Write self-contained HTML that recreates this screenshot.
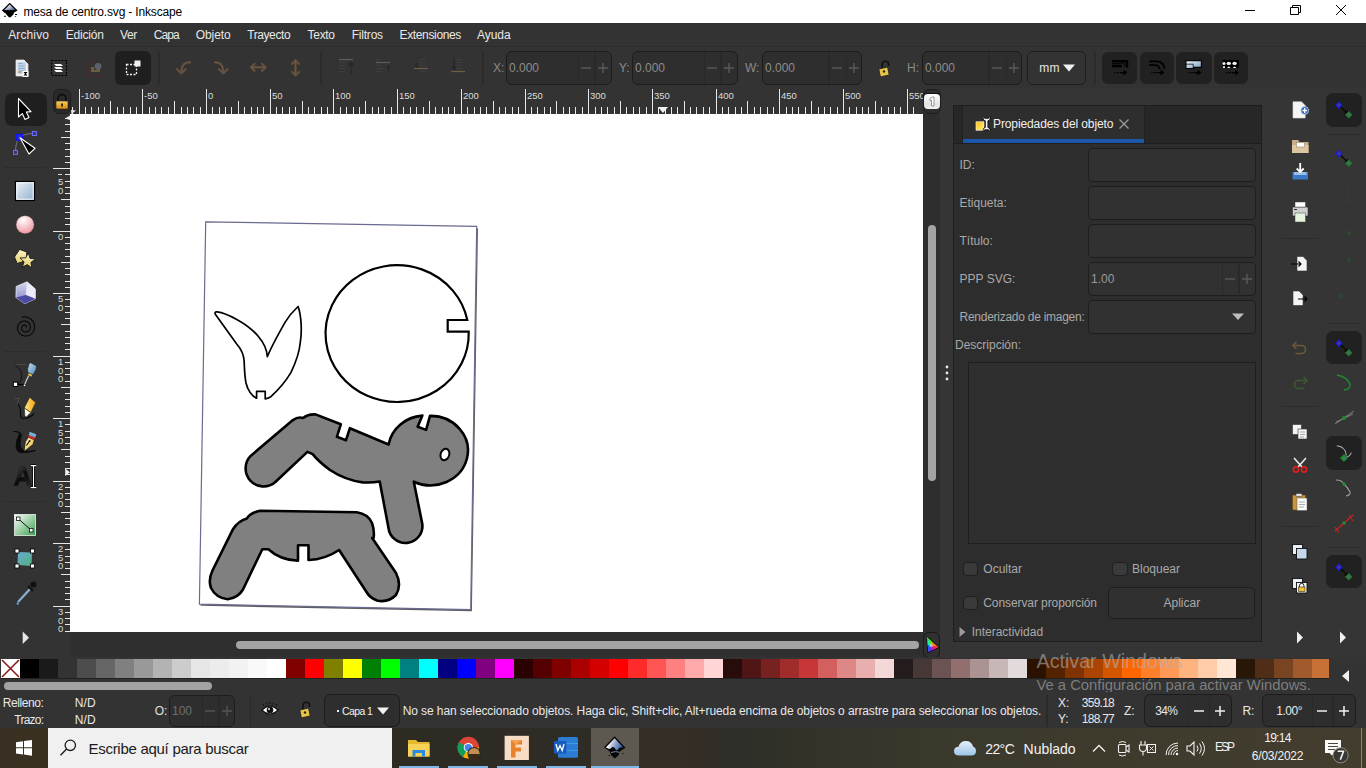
<!DOCTYPE html><html><head><meta charset="utf-8"><style>
html,body{margin:0;padding:0;width:1366px;height:768px;overflow:hidden;background:#333333;}
body{position:relative;font-family:"Liberation Sans",sans-serif;}
.t{position:absolute;white-space:pre;}
svg{position:absolute;overflow:visible;}
</style></head><body><div style="position:absolute;left:0px;top:0px;width:1366px;height:23px;background:#ffffff"></div><span class="t" style="left:23.4px;top:5.5px;font:400 12px/12px 'Liberation Sans';color:#000000;letter-spacing:-0.163px;">mesa de centro.svg - Inkscape</span><svg style="left:0;top:0" width="22" height="22" viewBox="0 0 22 22"><defs><linearGradient id="gink" x1="0" y1="0" x2="1" y2="1"><stop offset="0.2" stop-color="#ffffff"/><stop offset="1" stop-color="#2a4a8a"/></linearGradient></defs><path d="M9.7 2.8L17.6 10.5L14.5 12.2Q13.3 13 13.6 14.2L11.2 16.8Q9.8 18.3 8.4 16.8L6.6 14.8Q6.2 13.3 4.5 12.8L1.9 10.5Z" fill="#000"/><path d="M9.7 4.6L15.4 10.2Q13.5 9.3 12.2 10.3Q10.8 9 9.2 10.4Q7.6 9.2 6.2 10.2Q5 9.6 4.1 10.2Z" fill="url(#gink)"/><path d="M4 16.3h1.8M15 14.5h2M15.3 16.5h0.8" stroke="#000" stroke-width="1"/></svg><svg style="left:1230px;top:0" width="136" height="23" viewBox="1230 0 136 23"><path d="M1245 10.5h10" stroke="#000" stroke-width="1"/><path d="M1290.5 7.5h8v7h-8z" stroke="#000" stroke-width="1" fill="none"/><path d="M1292.5 7.5V5.5H1300.5V12.5H1298.5" stroke="#000" stroke-width="1" fill="none"/><path d="M1336 5l10 10M1346 5l-10 10" stroke="#000" stroke-width="1"/></svg><div style="position:absolute;left:0px;top:23px;width:1366px;height:23px;background:#333333"></div><span class="t" style="left:8.2px;top:28.6px;font:400 12px/12px 'Liberation Sans';color:#e8e8e8;letter-spacing:0.126px;">Archivo</span><span class="t" style="left:65.7px;top:28.6px;font:400 12px/12px 'Liberation Sans';color:#e8e8e8;letter-spacing:-0.194px;">Edición</span><span class="t" style="left:119.9px;top:28.6px;font:400 12px/12px 'Liberation Sans';color:#e8e8e8;letter-spacing:-0.305px;">Ver</span><span class="t" style="left:153.8px;top:28.6px;font:400 12px/12px 'Liberation Sans';color:#e8e8e8;letter-spacing:-0.897px;">Capa</span><span class="t" style="left:195.7px;top:28.6px;font:400 12px/12px 'Liberation Sans';color:#e8e8e8;letter-spacing:-0.060px;">Objeto</span><span class="t" style="left:247.2px;top:28.6px;font:400 12px/12px 'Liberation Sans';color:#e8e8e8;letter-spacing:-0.406px;">Trayecto</span><span class="t" style="left:307.6px;top:28.6px;font:400 12px/12px 'Liberation Sans';color:#e8e8e8;letter-spacing:-0.318px;">Texto</span><span class="t" style="left:351.7px;top:28.6px;font:400 12px/12px 'Liberation Sans';color:#e8e8e8;letter-spacing:-0.210px;">Filtros</span><span class="t" style="left:399.5px;top:28.6px;font:400 12px/12px 'Liberation Sans';color:#e8e8e8;letter-spacing:-0.352px;">Extensiones</span><span class="t" style="left:477.1px;top:28.6px;font:400 12px/12px 'Liberation Sans';color:#e8e8e8;letter-spacing:-0.083px;">Ayuda</span><div style="position:absolute;left:0px;top:46px;width:1366px;height:1px;background:#2b2b2b"></div><div style="position:absolute;left:0px;top:47px;width:1366px;height:42px;background:#333333"></div><svg style="left:15px;top:59px" width="14" height="18" viewBox="0 0 14 18"><path d="M1 1h8l4 4v12H1z" fill="#f4f4f4" stroke="#d8d8d8" stroke-width="0.8"/><rect x="2.5" y="3" width="8.5" height="12" fill="#bcd3ea"/><path d="M3.5 4.5h4M3.5 7h6M3.5 9.5h6M3.5 12h6" stroke="#8aa6c4" stroke-width="0.9"/><rect x="3.5" y="12" width="3" height="2" fill="#d8a060"/><rect x="7.5" y="12" width="6" height="6" fill="#ffffff"/><path d="M8.5 13h4l-1.5 1.8l1.5 1.8h-4l1.5-1.8z" fill="#000"/></svg><svg style="left:51px;top:60px" width="16" height="16" viewBox="0 0 16 16"><rect x="0.5" y="0.5" width="15" height="15" fill="none" stroke="#000" stroke-width="1.1" stroke-dasharray="2,1.3"/><path d="M3 4l7 0l2 2l-7 0z M3 7l7 0l2 2l-7 0z M3 10l7 0l2 2l-7 0z" fill="#fafafa"/></svg><svg style="left:88px;top:60px" width="16" height="16" viewBox="0 0 16 16"><rect x="0.5" y="0.5" width="15" height="15" fill="none" stroke="#5a2222" stroke-width="0.9" stroke-dasharray="1.6,1.4"/><path d="M3 7l3 0l0 3l3 0l0 -1l3 0l0 3l-9 0z" fill="#6e5d3c"/><circle cx="10" cy="6.5" r="3.4" fill="#5d6066"/></svg><div style="position:absolute;left:115px;top:51px;width:36px;height:34px;background:#1f1f1f;border-radius:6px"></div><svg style="left:125px;top:60px" width="17" height="16" viewBox="0 0 17 16"><rect x="1.5" y="4.5" width="10" height="10" fill="none" stroke="#f0f0f0" stroke-width="1.3" stroke-dasharray="2,1.5"/><rect x="9.5" y="0.5" width="6" height="6" fill="#f0f0f0"/></svg><div style="position:absolute;left:158px;top:51px;width:2px;height:34px;background:#2c2c2c"></div><div style="position:absolute;left:320px;top:51px;width:2px;height:34px;background:#2c2c2c"></div><div style="position:absolute;left:482px;top:51px;width:2px;height:34px;background:#2c2c2c"></div><div style="position:absolute;left:1094px;top:51px;width:2px;height:34px;background:#2c2c2c"></div><svg style="left:170px;top:55px" width="140" height="25" viewBox="170 55 140 25"><g fill="none" stroke-linecap="round" stroke-linejoin="round"><path d="M190 62.3Q181.8 62 181.3 71.5M177 69.2l4.3 4.3l4.3-4.3" stroke="#5e4a34" stroke-width="2.4"/><path d="M190 62.3Q181.8 62 181.3 71.5M177 69.2l4.3 4.3l4.3-4.3" stroke="#6a625a" stroke-width="0.7"/><path d="M215 62.3Q222.8 62 223.3 71.5M219 69.2l4.3 4.3l4.3-4.3" stroke="#5e4a34" stroke-width="2.4"/><path d="M215 62.3Q222.8 62 223.3 71.5M219 69.2l4.3 4.3l4.3-4.3" stroke="#6a625a" stroke-width="0.7"/><path d="M251 67.3h14.5M254.5 63.8l-3.5 3.5l3.5 3.5M262 63.8l3.5 3.5l-3.5 3.5" stroke="#5e4a34" stroke-width="2.4"/><path d="M251 67.3h14.5M254.5 63.8l-3.5 3.5l3.5 3.5M262 63.8l3.5 3.5l-3.5 3.5" stroke="#6a625a" stroke-width="0.7"/><path d="M295.5 60.3v15M292 63.8l3.5-3.5l3.5 3.5M292 71.8l3.5 3.5l3.5-3.5" stroke="#5e4a34" stroke-width="2.4"/><path d="M295.5 60.3v15M292 63.8l3.5-3.5l3.5 3.5M292 71.8l3.5 3.5l3.5-3.5" stroke="#6a625a" stroke-width="0.7"/></g></svg><svg style="left:338px;top:58px" width="130" height="18" viewBox="0 0 130 18"><path d="M1 1.5h14" stroke="#5c5c5c" stroke-width="1.2"/><path d="M1 4.5h6M1 7.5h6M1 10.5h6M1 13.5h6" stroke="#3e3e3e" stroke-width="1"/><path d="M13 16V5M10.5 7.5l2.5-3l2.5 3" stroke="#262626" stroke-width="1.2" fill="none"/><path d="M38 1.5h6M38 7.5h6M38 10.5h8M38 13.5h6" stroke="#3e3e3e" stroke-width="1"/><path d="M38 4.5h14" stroke="#5c5c5c" stroke-width="1.2"/><path d="M49 9.5l1.5-1.5l1.5 1.5M50.5 8v5" stroke="#262626" stroke-width="1.2" fill="none"/><path d="M82 1.5h6M80 4.5h8M82 7.5h6M82 13.5h6" stroke="#3e3e3e" stroke-width="1"/><path d="M76 10.5h14" stroke="#6c6040" stroke-width="1.2"/><path d="M80 5l-2.5 2.5l2.5 2.5" stroke="#262626" stroke-width="1.2" fill="none"/><path d="M118 1.5h6M118 4.5h6M118 7.5h6M118 10.5h6" stroke="#3e3e3e" stroke-width="1"/><path d="M113 13.5h14" stroke="#6c6040" stroke-width="1.2"/><path d="M116 1v10M113.5 8.5l2.5 2.5l2.5-2.5" stroke="#262626" stroke-width="1.2" fill="none"/></svg><div style="position:absolute;left:506px;top:51px;width:106px;height:34px;box-sizing:border-box;border:1px solid #1d1d1d;border-radius:6px;background:#2e2e2e"></div><div style="position:absolute;left:578px;top:52px;width:1px;height:32px;background:#292929"></div><div style="position:absolute;left:594px;top:52px;width:2px;height:32px;background:#292929"></div><svg style="left:580.0px;top:62.0px" width="12" height="12" viewBox="0 0 12 12"><path d="M1 6h10" stroke="#5a5a5a" stroke-width="1.4"/></svg><svg style="left:597.25px;top:62.0px" width="12" height="12" viewBox="0 0 12 12"><path d="M1 6h10M6 1v10" stroke="#5a5a5a" stroke-width="1.4"/></svg><span class="t" style="left:509.0px;top:62.1px;font:400 12px/12px 'Liberation Sans';color:#8c8c8c;letter-spacing:0.000px;">0.000</span><div style="position:absolute;left:632px;top:51px;width:106px;height:34px;box-sizing:border-box;border:1px solid #1d1d1d;border-radius:6px;background:#2e2e2e"></div><div style="position:absolute;left:704px;top:52px;width:1px;height:32px;background:#292929"></div><div style="position:absolute;left:720px;top:52px;width:2px;height:32px;background:#292929"></div><svg style="left:706.0px;top:62.0px" width="12" height="12" viewBox="0 0 12 12"><path d="M1 6h10" stroke="#5a5a5a" stroke-width="1.4"/></svg><svg style="left:723.25px;top:62.0px" width="12" height="12" viewBox="0 0 12 12"><path d="M1 6h10M6 1v10" stroke="#5a5a5a" stroke-width="1.4"/></svg><span class="t" style="left:635.0px;top:62.1px;font:400 12px/12px 'Liberation Sans';color:#8c8c8c;letter-spacing:0.000px;">0.000</span><div style="position:absolute;left:762px;top:51px;width:100px;height:34px;box-sizing:border-box;border:1px solid #1d1d1d;border-radius:6px;background:#2e2e2e"></div><div style="position:absolute;left:828px;top:52px;width:2px;height:32px;background:#292929"></div><div style="position:absolute;left:846px;top:52px;width:1px;height:32px;background:#292929"></div><svg style="left:831.0px;top:62.0px" width="12" height="12" viewBox="0 0 12 12"><path d="M1 6h10" stroke="#5a5a5a" stroke-width="1.4"/></svg><svg style="left:847.75px;top:62.0px" width="12" height="12" viewBox="0 0 12 12"><path d="M1 6h10M6 1v10" stroke="#5a5a5a" stroke-width="1.4"/></svg><span class="t" style="left:765.0px;top:62.1px;font:400 12px/12px 'Liberation Sans';color:#8c8c8c;letter-spacing:0.000px;">0.000</span><div style="position:absolute;left:922px;top:51px;width:100px;height:34px;box-sizing:border-box;border:1px solid #1d1d1d;border-radius:6px;background:#2e2e2e"></div><div style="position:absolute;left:988px;top:52px;width:2px;height:32px;background:#292929"></div><div style="position:absolute;left:1006px;top:52px;width:1px;height:32px;background:#292929"></div><svg style="left:991.0px;top:62.0px" width="12" height="12" viewBox="0 0 12 12"><path d="M1 6h10" stroke="#5a5a5a" stroke-width="1.4"/></svg><svg style="left:1007.75px;top:62.0px" width="12" height="12" viewBox="0 0 12 12"><path d="M1 6h10M6 1v10" stroke="#5a5a5a" stroke-width="1.4"/></svg><span class="t" style="left:925.0px;top:62.1px;font:400 12px/12px 'Liberation Sans';color:#8c8c8c;letter-spacing:0.000px;">0.000</span><span class="t" style="left:493.0px;top:61.8px;font:400 12px/12px 'Liberation Sans';color:#8c8c8c;letter-spacing:0.000px;">X:</span><span class="t" style="left:619.0px;top:61.8px;font:400 12px/12px 'Liberation Sans';color:#8c8c8c;letter-spacing:0.000px;">Y:</span><span class="t" style="left:745.0px;top:61.8px;font:400 12px/12px 'Liberation Sans';color:#8c8c8c;letter-spacing:0.000px;">W:</span><span class="t" style="left:907.0px;top:61.8px;font:400 12px/12px 'Liberation Sans';color:#8c8c8c;letter-spacing:0.000px;">H:</span><svg style="left:877px;top:58.5px" width="16" height="20" viewBox="0 0 16 20"><path d="M5 9V5.5a3.3 3.3 0 0 1 6.6 0V7" stroke="#111" stroke-width="1.6" fill="none"/><rect x="2.5" y="9" width="9" height="8" rx="1" fill="#e8c447" stroke="#222" stroke-width="0.8" transform="rotate(-12 7 13)"/><circle cx="7" cy="12.5" r="1.2" fill="#222"/></svg><div style="position:absolute;left:1027px;top:51px;width:59px;height:34px;box-sizing:border-box;border:1px solid #1d1d1d;border-radius:6px;background:#333333"></div><span class="t" style="left:1039.3px;top:61.5px;font:400 12px/12px 'Liberation Sans';color:#e6e6e6;letter-spacing:0.100px;">mm</span><svg style="left:1062px;top:64px" width="14" height="8" viewBox="0 0 14 8"><path d="M1 0.5h12L7 7.5z" fill="#f2f2f2"/></svg><div style="position:absolute;left:1102px;top:52px;width:35px;height:32px;background:#212121;border-radius:6px"></div><div style="position:absolute;left:1140px;top:52px;width:34px;height:32px;background:#212121;border-radius:6px"></div><div style="position:absolute;left:1176px;top:52px;width:36px;height:32px;background:#212121;border-radius:6px"></div><div style="position:absolute;left:1214px;top:52px;width:34px;height:32px;background:#212121;border-radius:6px"></div><svg style="left:1100px;top:50px" width="150" height="36" viewBox="1100 50 150 36"><path d="M1112 61.2H1127V67.6M1112 66H1122" stroke="#000" stroke-width="2.4" fill="none"/><path d="M1112 63.6H1124.5V67" stroke="#000" stroke-width="0.8" fill="none"/><path d="M1114.5 72.6h1.2M1117.0 72.6h2M1120.0 72.6h4" stroke="#000" stroke-width="1.3"/><path d="M1123.5 69.8L1127.5 72.6L1123.5 75.5Z" fill="#000"/><path d="M1149 61.3H1157A7.5 7.5 0 0 1 1164.5 68.8M1149 65.2H1155.5A4 4 0 0 1 1159.5 69.2" stroke="#000" stroke-width="1.8" fill="none"/><path d="M1151.5 72.6h1.2M1154.0 72.6h2M1157.0 72.6h4" stroke="#000" stroke-width="1.3"/><path d="M1160.5 69.8L1164.5 72.6L1160.5 75.5Z" fill="#000"/><defs><linearGradient id="gbl" x1="0" y1="0" x2="1" y2="1"><stop offset="0" stop-color="#f0f4fa"/><stop offset="1" stop-color="#7a9ac0"/></linearGradient></defs><path d="M1185.5 60.2H1201.8V68H1194.5V69H1185.5Z" fill="#000"/><path d="M1186.5 61.2H1200.8V66.8H1193.5V63.8H1186.5Z M1186.5 64.6H1192.8V68H1186.5Z" fill="url(#gbl)"/><path d="M1188.5 72.6h1.2M1191.0 72.6h2M1194.0 72.6h4" stroke="#000" stroke-width="1.3"/><path d="M1197.5 69.8L1201.5 72.6L1197.5 75.5Z" fill="#000"/><rect x="1222.8" y="59.9" width="16.2" height="8.1" fill="#000"/><ellipse cx="1224" cy="63.5" rx="1.5" ry="1.6" fill="#f2f2f2"/><ellipse cx="1228.8" cy="63.4" rx="2.2" ry="1.6" fill="#f2f2f2"/><ellipse cx="1234.6" cy="63.4" rx="2.2" ry="1.6" fill="#f2f2f2"/><path d="M1223 68V66.5Q1224 65.5 1225 66.5V68Z M1227 68Q1228.8 65 1230.6 68Z M1232.8 68Q1234.6 65 1236.4 68Z" fill="#f2f2f2"/><path d="M1226 72.6h1.2M1228.5 72.6h2M1231.5 72.6h4" stroke="#000" stroke-width="1.3"/><path d="M1235 69.8L1239 72.6L1235 75.5Z" fill="#000"/></svg><div style="position:absolute;left:0px;top:89px;width:1366px;height:568px;background:#333333"></div><div style="position:absolute;left:70px;top:114px;width:853px;height:518px;background:#ffffff"></div><div style="position:absolute;left:5px;top:93px;width:42px;height:33px;background:#1f1f1f;border-radius:7px"></div><svg style="left:0px;top:90px" width="50" height="560" viewBox="0 90 50 560"><path d="M18.5 98.5L18.5 117L22.3 113.6L25 119.6L29 117.6L26.3 112L31 111.6Z" fill="#000" stroke="#fff" stroke-width="1.1" stroke-linejoin="round"/><path d="M34.4 133.5Q24 133.5 19.6 137.3Q15.5 142 15.5 152.4" stroke="#8a8a8a" stroke-width="0.8" fill="none"/><rect x="16.6" y="134.3" width="6" height="6" fill="#2a2acc" stroke="#1010ff" stroke-width="1"/><rect x="32.4" y="131.5" width="4" height="4" fill="#3a3a6a" stroke="#6a6aff" stroke-width="1"/><rect x="13.5" y="150.4" width="4" height="4" fill="#3a3a6a" stroke="#6a6aff" stroke-width="1"/><path d="M20 137.8L35 148.3L29 154Z" fill="#000" stroke="#fff" stroke-width="1.1" stroke-linejoin="round"/><path d="M4 167.5h42M4 351.5h42M4 501.5h42" stroke="#2c2c2c" stroke-width="1"/><defs><linearGradient id="grect" x1="0" y1="0" x2="1" y2="1"><stop offset="0" stop-color="#eef3f8"/><stop offset="1" stop-color="#8fb0d0"/></linearGradient><radialGradient id="gcirc" cx="0.4" cy="0.25" r="0.8"><stop offset="0" stop-color="#ffffff"/><stop offset="1" stop-color="#f08f9c"/></radialGradient><linearGradient id="ggrad" x1="0" y1="0" x2="1" y2="1"><stop offset="0" stop-color="#ffffff"/><stop offset="1" stop-color="#3aa050"/></linearGradient><linearGradient id="gmesh" x1="0" y1="0" x2="1" y2="1"><stop offset="0" stop-color="#6aaad0"/><stop offset="1" stop-color="#50b080"/></linearGradient></defs><rect x="15.5" y="181.5" width="19" height="19" fill="url(#grect)" stroke="#000" stroke-width="1.2"/><rect x="16.8" y="182.8" width="16.4" height="16.4" fill="none" stroke="#fff" stroke-width="0.9"/><circle cx="25.1" cy="224.7" r="9.2" fill="url(#gcirc)" stroke="#333" stroke-width="0.6"/><defs><linearGradient id="gst" x1="0" y1="0" x2="0" y2="1"><stop offset="0" stop-color="#fbf4c8"/><stop offset="1" stop-color="#e6cf6a"/></linearGradient><linearGradient id="gbx" x1="0" y1="0" x2="0" y2="1"><stop offset="0" stop-color="#d6d6ee"/><stop offset="1" stop-color="#8484c4"/></linearGradient></defs><path d="M14.5 257L19.6 249.4L26.8 252L26.2 260.5L17.2 263.5Z" fill="url(#gst)" stroke="#1a1a1a" stroke-width="0.9" stroke-linejoin="round"/><path d="M28.26 252.83L29.94 258.27L35.58 259.10L30.92 262.38L31.87 268.00L27.31 264.59L22.27 267.23L24.10 261.84L20.03 257.85L25.72 257.93Z" fill="url(#gst)" stroke="#1a1a1a" stroke-width="0.9" stroke-linejoin="round"/><path d="M27 281.8L35.3 288.9V298.8L24.8 303.7L15.9 297.5L16.2 286.4Z" fill="url(#gbx)" stroke="#f0f0f8" stroke-width="0.7"/><path d="M27 281.8L35.3 288.9V298.8L25.8 295Z" fill="#ececfa"/><path d="M25.8 295L35.3 298.8L24.8 303.7L15.9 297.5Z" fill="#4c4ca6"/><path d="M26.30 327.50 L26.34 327.40 L26.38 327.30 L26.41 327.19 L26.43 327.08 L26.44 326.96 L26.44 326.84 L26.43 326.71 L26.40 326.58 L26.37 326.46 L26.33 326.33 L26.27 326.20 L26.21 326.08 L26.13 325.96 L26.04 325.84 L25.94 325.73 L25.83 325.62 L25.71 325.52 L25.57 325.43 L25.43 325.35 L25.28 325.27 L25.12 325.21 L24.96 325.16 L24.78 325.13 L24.60 325.10 L24.42 325.09 L24.23 325.09 L24.05 325.11 L23.85 325.14 L23.66 325.19 L23.47 325.25 L23.29 325.33 L23.10 325.43 L22.92 325.54 L22.75 325.66 L22.59 325.80 L22.43 325.96 L22.28 326.13 L22.15 326.31 L22.02 326.50 L21.91 326.71 L21.82 326.92 L21.74 327.15 L21.67 327.39 L21.63 327.63 L21.60 327.88 L21.59 328.13 L21.60 328.39 L21.63 328.64 L21.67 328.90 L21.74 329.16 L21.83 329.42 L21.94 329.67 L22.07 329.91 L22.21 330.15 L22.38 330.38 L22.57 330.60 L22.77 330.81 L22.99 331.00 L23.23 331.18 L23.48 331.34 L23.75 331.48 L24.03 331.61 L24.32 331.72 L24.62 331.80 L24.93 331.86 L25.25 331.90 L25.57 331.92 L25.90 331.92 L26.23 331.88 L26.56 331.83 L26.89 331.75 L27.21 331.64 L27.53 331.51 L27.84 331.36 L28.14 331.18 L28.43 330.97 L28.71 330.75 L28.97 330.50 L29.22 330.23 L29.44 329.94 L29.65 329.64 L29.84 329.31 L30.00 328.97 L30.14 328.62 L30.25 328.25 L30.34 327.87 L30.40 327.48 L30.43 327.09 L30.44 326.69 L30.41 326.29 L30.35 325.89 L30.27 325.49 L30.15 325.10 L30.01 324.71 L29.83 324.33 L29.63 323.96 L29.39 323.60 L29.13 323.26 L28.85 322.94 L28.54 322.63 L28.20 322.35 L27.84 322.09 L27.46 321.86 L27.06 321.65 L26.65 321.47 L26.22 321.32 L25.78 321.20 L25.32 321.12 L24.86 321.06 L24.39 321.04 L23.92 321.06 L23.44 321.11 L22.97 321.19 L22.50 321.31 L22.04 321.46 L21.59 321.65 L21.15 321.87 L20.73 322.13 L20.32 322.42 L19.93 322.74 L19.56 323.09 L19.22 323.46 L18.90 323.87 L18.61 324.30 L18.35 324.75 L18.13 325.22 L17.94 325.71 L17.78 326.22 L17.66 326.74 L17.57 327.27 L17.53 327.81 L17.52 328.35 L17.56 328.90 L17.63 329.44 L17.75 329.98 L17.90 330.52 L18.10 331.04 L18.33 331.56 L18.60 332.06 L18.91 332.54 L19.26 333.00 L19.64 333.43 L20.05 333.84 L20.50 334.22 L20.97 334.57 L21.47 334.88 L21.99 335.16 L22.54 335.40 L23.11 335.61 L23.69 335.77 L24.29 335.89 L24.89 335.97 L25.51 336.00 L26.13 335.99 L26.75 335.93 L27.36 335.83 L27.97 335.68 L28.58 335.49 L29.17 335.25 L29.74 334.97 L30.29 334.64 L30.83 334.28 L31.33 333.87 L31.81 333.43 L32.26 332.95 L32.68 332.44 L33.05 331.89 L33.39 331.32 L33.69 330.72 L33.95 330.10 L34.16 329.46 L34.32 328.80 L34.44 328.12 L34.50 327.44 L34.52 326.75 L34.49 326.06 L34.41 325.37 L34.27 324.68 L34.09 324.00 L33.86 323.33 L33.57 322.68 L33.24 322.05 L32.86 321.44 L32.44 320.86 L31.97 320.30 L31.47 319.78 L30.92 319.30 L30.34 318.85 L29.72 318.45 L29.07 318.09 L28.40 317.77 L27.70 317.51 L26.98 317.29 L26.24 317.13 L25.49 317.02 L24.74 316.96 L23.97 316.96 L23.20 317.02 L22.44 317.13 L21.68 317.30" stroke="#0a0a0a" stroke-width="1.2" fill="none"/><defs><linearGradient id="gpen" x1="0" y1="0" x2="1" y2="1"><stop offset="0" stop-color="#c4e0f0"/><stop offset="1" stop-color="#4a88b8"/></linearGradient><linearGradient id="gpcl" x1="0" y1="0" x2="1" y2="0"><stop offset="0" stop-color="#fff080"/><stop offset="1" stop-color="#f09a10"/></linearGradient><linearGradient id="gnib" x1="0" y1="0" x2="1" y2="1"><stop offset="0" stop-color="#fff8d0"/><stop offset="1" stop-color="#e8b020"/></linearGradient></defs><path d="M15 364.5H26" stroke="#4a4a4a" stroke-width="0.9"/><path d="M15 364.5Q22 370 21.7 376.6Q21 383 17 384.3" stroke="#111" stroke-width="1" fill="none"/><path d="M17.7 384.5H24" stroke="#000" stroke-width="1.3"/><rect x="13.3" y="382.1" width="4.4" height="4.4" fill="#fff" stroke="#000" stroke-width="1"/><circle cx="24.6" cy="385.3" r="1.3" fill="#fff" stroke="#000" stroke-width="0.8"/><path d="M24.8 384L29 375" stroke="#cfcfcf" stroke-width="1.2"/><path d="M27.5 375L29 372.5L32.5 374.3L31.6 377Z" fill="#f2c84a" stroke="#222" stroke-width="0.5"/><path d="M29.2 363.6L30.8 362.8L36.5 366L36 369.8L33 374.8L28 372.5L27.6 369Z" fill="url(#gpen)" stroke="#222" stroke-width="0.6"/><path d="M14.5 398.5H19.5L17 404" stroke="#4a4a4a" stroke-width="0.9" fill="none"/><path d="M18 404Q21 408 20.5 413Q20 419 24 418.5Q30 418 34 413.5" stroke="#0a0a0a" stroke-width="1.2" fill="none"/><path d="M29.6 397.3L35.8 402.5L30.8 412.5L24.3 408Z" fill="url(#gpcl)" stroke="#222" stroke-width="0.6"/><path d="M24.3 408L30.8 412.5L25 418.3Z" fill="#fffbe8" stroke="#222" stroke-width="0.6"/><path d="M24.6 416.2L25 418.3L26.3 416.8Z" fill="#000"/><path d="M13.2 431.5Q19 431.5 19.5 434Q16 440 16 446Q16.5 452 21 452.8Q28 453 35.9 450.5Q29 452 24 450.5Q20 449 20 444Q20.5 438 21.5 434.5Q20 431 13.2 431.5Z" fill="#0a0a0a" stroke="#0a0a0a" stroke-width="0.8"/><path d="M24.1 451.4L25.3 442L28.3 437.3L34.3 439.8L33 444.5Z" fill="url(#gnib)" stroke="#111" stroke-width="0.7"/><path d="M26.5 445.5L29.3 441.2" stroke="#111" stroke-width="1.1"/><circle cx="29.6" cy="441" r="0.9" fill="#111"/><path d="M28 437.3L34.5 439.8L35.3 437.6L28.8 435Z" fill="#d62a2a"/><path d="M28.8 435L35.3 437.6L36.3 434.3L29.6 431.8Z" fill="#7ab0d8"/><defs><linearGradient id="gA" x1="0" y1="0" x2="1" y2="1"><stop offset="0" stop-color="#5a5a5a"/><stop offset="0.5" stop-color="#0a0a0a"/><stop offset="1" stop-color="#2a2a2a"/></linearGradient></defs><path d="M14 485.6L20.6 466.8H25L31.6 485.6H27.6L26.2 481.2H19.4L18 485.6Z M20.5 477.6H25.1L22.8 470.2Z" fill="url(#gA)" stroke="#141414" stroke-width="0.5" fill-rule="evenodd"/><path d="M30.8 465.6H36.3M33.5 465.6V487.6M30.8 487.6H36.3" stroke="#000" stroke-width="2.8"/><path d="M30.8 465.6H36.3M33.5 465.6V487.6M30.8 487.6H36.3" stroke="#fff" stroke-width="1.1"/><rect x="14.5" y="514.5" width="21" height="21" fill="url(#ggrad)" stroke="#e8f4e8" stroke-width="0.8"/><path d="M18.5 519L31 530" stroke="#111" stroke-width="1"/><rect x="16.5" y="517" width="3.5" height="3.5" fill="#fff" stroke="#111" stroke-width="0.8"/><rect x="29.5" y="528.5" width="3.5" height="3.5" fill="#fff" stroke="#111" stroke-width="0.8"/><path d="M18 552L32 552.5L31.5 566L17.5 565Z" fill="url(#gmesh)"/><rect x="15" y="549" width="4" height="4" fill="#fff" stroke="#000" stroke-width="0.8"/><rect x="30.5" y="549" width="4" height="4" fill="#fff" stroke="#000" stroke-width="0.8"/><rect x="15" y="564" width="4" height="4" fill="#fff" stroke="#000" stroke-width="0.8"/><rect x="30.5" y="564" width="4" height="4" fill="#fff" stroke="#000" stroke-width="0.8"/><path d="M18 602L30 589" stroke="#8ab0d8" stroke-width="2.2"/><path d="M28 586L33 591" stroke="#111" stroke-width="2.2"/><circle cx="33.5" cy="584.5" r="3" fill="#111"/><circle cx="17.8" cy="603.5" r="1.2" fill="#6a9ad0"/><path d="M22.7 631.5L29 637.8L22.7 644Z" fill="#e6e6e6"/></svg><svg style="left:0;top:0" width="1366" height="640" viewBox="0 0 1366 640" shape-rendering="crispEdges"><path d="M72.5 107V114" stroke="#e8e8e8" stroke-width="1"/><path d="M79.5 89V114" stroke="#e8e8e8" stroke-width="1"/><path d="M85.5 107V114" stroke="#e8e8e8" stroke-width="1"/><path d="M91.5 107V114" stroke="#e8e8e8" stroke-width="1"/><path d="M98.5 107V114" stroke="#e8e8e8" stroke-width="1"/><path d="M104.5 107V114" stroke="#e8e8e8" stroke-width="1"/><path d="M110.5 101V114" stroke="#e8e8e8" stroke-width="1"/><path d="M117.5 107V114" stroke="#e8e8e8" stroke-width="1"/><path d="M123.5 107V114" stroke="#e8e8e8" stroke-width="1"/><path d="M130.5 107V114" stroke="#e8e8e8" stroke-width="1"/><path d="M136.5 107V114" stroke="#e8e8e8" stroke-width="1"/><path d="M142.5 89V114" stroke="#e8e8e8" stroke-width="1"/><path d="M149.5 107V114" stroke="#e8e8e8" stroke-width="1"/><path d="M155.5 107V114" stroke="#e8e8e8" stroke-width="1"/><path d="M161.5 107V114" stroke="#e8e8e8" stroke-width="1"/><path d="M168.5 107V114" stroke="#e8e8e8" stroke-width="1"/><path d="M174.5 101V114" stroke="#e8e8e8" stroke-width="1"/><path d="M181.5 107V114" stroke="#e8e8e8" stroke-width="1"/><path d="M187.5 107V114" stroke="#e8e8e8" stroke-width="1"/><path d="M193.5 107V114" stroke="#e8e8e8" stroke-width="1"/><path d="M200.5 107V114" stroke="#e8e8e8" stroke-width="1"/><path d="M206.5 89V114" stroke="#e8e8e8" stroke-width="1"/><path d="M212.5 107V114" stroke="#e8e8e8" stroke-width="1"/><path d="M219.5 107V114" stroke="#e8e8e8" stroke-width="1"/><path d="M225.5 107V114" stroke="#e8e8e8" stroke-width="1"/><path d="M231.5 107V114" stroke="#e8e8e8" stroke-width="1"/><path d="M238.5 101V114" stroke="#e8e8e8" stroke-width="1"/><path d="M244.5 107V114" stroke="#e8e8e8" stroke-width="1"/><path d="M251.5 107V114" stroke="#e8e8e8" stroke-width="1"/><path d="M257.5 107V114" stroke="#e8e8e8" stroke-width="1"/><path d="M263.5 107V114" stroke="#e8e8e8" stroke-width="1"/><path d="M270.5 89V114" stroke="#e8e8e8" stroke-width="1"/><path d="M276.5 107V114" stroke="#e8e8e8" stroke-width="1"/><path d="M282.5 107V114" stroke="#e8e8e8" stroke-width="1"/><path d="M289.5 107V114" stroke="#e8e8e8" stroke-width="1"/><path d="M295.5 107V114" stroke="#e8e8e8" stroke-width="1"/><path d="M302.5 101V114" stroke="#e8e8e8" stroke-width="1"/><path d="M308.5 107V114" stroke="#e8e8e8" stroke-width="1"/><path d="M314.5 107V114" stroke="#e8e8e8" stroke-width="1"/><path d="M321.5 107V114" stroke="#e8e8e8" stroke-width="1"/><path d="M327.5 107V114" stroke="#e8e8e8" stroke-width="1"/><path d="M333.5 89V114" stroke="#e8e8e8" stroke-width="1"/><path d="M340.5 107V114" stroke="#e8e8e8" stroke-width="1"/><path d="M346.5 107V114" stroke="#e8e8e8" stroke-width="1"/><path d="M353.5 107V114" stroke="#e8e8e8" stroke-width="1"/><path d="M359.5 107V114" stroke="#e8e8e8" stroke-width="1"/><path d="M365.5 101V114" stroke="#e8e8e8" stroke-width="1"/><path d="M372.5 107V114" stroke="#e8e8e8" stroke-width="1"/><path d="M378.5 107V114" stroke="#e8e8e8" stroke-width="1"/><path d="M384.5 107V114" stroke="#e8e8e8" stroke-width="1"/><path d="M391.5 107V114" stroke="#e8e8e8" stroke-width="1"/><path d="M397.5 89V114" stroke="#e8e8e8" stroke-width="1"/><path d="M403.5 107V114" stroke="#e8e8e8" stroke-width="1"/><path d="M410.5 107V114" stroke="#e8e8e8" stroke-width="1"/><path d="M416.5 107V114" stroke="#e8e8e8" stroke-width="1"/><path d="M423.5 107V114" stroke="#e8e8e8" stroke-width="1"/><path d="M429.5 101V114" stroke="#e8e8e8" stroke-width="1"/><path d="M435.5 107V114" stroke="#e8e8e8" stroke-width="1"/><path d="M442.5 107V114" stroke="#e8e8e8" stroke-width="1"/><path d="M448.5 107V114" stroke="#e8e8e8" stroke-width="1"/><path d="M454.5 107V114" stroke="#e8e8e8" stroke-width="1"/><path d="M461.5 89V114" stroke="#e8e8e8" stroke-width="1"/><path d="M467.5 107V114" stroke="#e8e8e8" stroke-width="1"/><path d="M474.5 107V114" stroke="#e8e8e8" stroke-width="1"/><path d="M480.5 107V114" stroke="#e8e8e8" stroke-width="1"/><path d="M486.5 107V114" stroke="#e8e8e8" stroke-width="1"/><path d="M493.5 101V114" stroke="#e8e8e8" stroke-width="1"/><path d="M499.5 107V114" stroke="#e8e8e8" stroke-width="1"/><path d="M505.5 107V114" stroke="#e8e8e8" stroke-width="1"/><path d="M512.5 107V114" stroke="#e8e8e8" stroke-width="1"/><path d="M518.5 107V114" stroke="#e8e8e8" stroke-width="1"/><path d="M525.5 89V114" stroke="#e8e8e8" stroke-width="1"/><path d="M531.5 107V114" stroke="#e8e8e8" stroke-width="1"/><path d="M537.5 107V114" stroke="#e8e8e8" stroke-width="1"/><path d="M544.5 107V114" stroke="#e8e8e8" stroke-width="1"/><path d="M550.5 107V114" stroke="#e8e8e8" stroke-width="1"/><path d="M556.5 101V114" stroke="#e8e8e8" stroke-width="1"/><path d="M563.5 107V114" stroke="#e8e8e8" stroke-width="1"/><path d="M569.5 107V114" stroke="#e8e8e8" stroke-width="1"/><path d="M575.5 107V114" stroke="#e8e8e8" stroke-width="1"/><path d="M582.5 107V114" stroke="#e8e8e8" stroke-width="1"/><path d="M588.5 89V114" stroke="#e8e8e8" stroke-width="1"/><path d="M595.5 107V114" stroke="#e8e8e8" stroke-width="1"/><path d="M601.5 107V114" stroke="#e8e8e8" stroke-width="1"/><path d="M607.5 107V114" stroke="#e8e8e8" stroke-width="1"/><path d="M614.5 107V114" stroke="#e8e8e8" stroke-width="1"/><path d="M620.5 101V114" stroke="#e8e8e8" stroke-width="1"/><path d="M626.5 107V114" stroke="#e8e8e8" stroke-width="1"/><path d="M633.5 107V114" stroke="#e8e8e8" stroke-width="1"/><path d="M639.5 107V114" stroke="#e8e8e8" stroke-width="1"/><path d="M646.5 107V114" stroke="#e8e8e8" stroke-width="1"/><path d="M652.5 89V114" stroke="#e8e8e8" stroke-width="1"/><path d="M658.5 107V114" stroke="#e8e8e8" stroke-width="1"/><path d="M665.5 107V114" stroke="#e8e8e8" stroke-width="1"/><path d="M671.5 107V114" stroke="#e8e8e8" stroke-width="1"/><path d="M677.5 107V114" stroke="#e8e8e8" stroke-width="1"/><path d="M684.5 101V114" stroke="#e8e8e8" stroke-width="1"/><path d="M690.5 107V114" stroke="#e8e8e8" stroke-width="1"/><path d="M696.5 107V114" stroke="#e8e8e8" stroke-width="1"/><path d="M703.5 107V114" stroke="#e8e8e8" stroke-width="1"/><path d="M709.5 107V114" stroke="#e8e8e8" stroke-width="1"/><path d="M716.5 89V114" stroke="#e8e8e8" stroke-width="1"/><path d="M722.5 107V114" stroke="#e8e8e8" stroke-width="1"/><path d="M728.5 107V114" stroke="#e8e8e8" stroke-width="1"/><path d="M735.5 107V114" stroke="#e8e8e8" stroke-width="1"/><path d="M741.5 107V114" stroke="#e8e8e8" stroke-width="1"/><path d="M747.5 101V114" stroke="#e8e8e8" stroke-width="1"/><path d="M754.5 107V114" stroke="#e8e8e8" stroke-width="1"/><path d="M760.5 107V114" stroke="#e8e8e8" stroke-width="1"/><path d="M767.5 107V114" stroke="#e8e8e8" stroke-width="1"/><path d="M773.5 107V114" stroke="#e8e8e8" stroke-width="1"/><path d="M779.5 89V114" stroke="#e8e8e8" stroke-width="1"/><path d="M786.5 107V114" stroke="#e8e8e8" stroke-width="1"/><path d="M792.5 107V114" stroke="#e8e8e8" stroke-width="1"/><path d="M798.5 107V114" stroke="#e8e8e8" stroke-width="1"/><path d="M805.5 107V114" stroke="#e8e8e8" stroke-width="1"/><path d="M811.5 101V114" stroke="#e8e8e8" stroke-width="1"/><path d="M818.5 107V114" stroke="#e8e8e8" stroke-width="1"/><path d="M824.5 107V114" stroke="#e8e8e8" stroke-width="1"/><path d="M830.5 107V114" stroke="#e8e8e8" stroke-width="1"/><path d="M837.5 107V114" stroke="#e8e8e8" stroke-width="1"/><path d="M843.5 89V114" stroke="#e8e8e8" stroke-width="1"/><path d="M849.5 107V114" stroke="#e8e8e8" stroke-width="1"/><path d="M856.5 107V114" stroke="#e8e8e8" stroke-width="1"/><path d="M862.5 107V114" stroke="#e8e8e8" stroke-width="1"/><path d="M868.5 107V114" stroke="#e8e8e8" stroke-width="1"/><path d="M875.5 101V114" stroke="#e8e8e8" stroke-width="1"/><path d="M881.5 107V114" stroke="#e8e8e8" stroke-width="1"/><path d="M888.5 107V114" stroke="#e8e8e8" stroke-width="1"/><path d="M894.5 107V114" stroke="#e8e8e8" stroke-width="1"/><path d="M900.5 107V114" stroke="#e8e8e8" stroke-width="1"/><path d="M907.5 89V114" stroke="#e8e8e8" stroke-width="1"/><path d="M913.5 107V114" stroke="#e8e8e8" stroke-width="1"/><path d="M65 118.5H70" stroke="#e8e8e8" stroke-width="1"/><path d="M65 124.5H70" stroke="#e8e8e8" stroke-width="1"/><path d="M65 131.5H70" stroke="#e8e8e8" stroke-width="1"/><path d="M61 137.5H70" stroke="#e8e8e8" stroke-width="1"/><path d="M65 143.5H70" stroke="#e8e8e8" stroke-width="1"/><path d="M65 149.5H70" stroke="#e8e8e8" stroke-width="1"/><path d="M65 156.5H70" stroke="#e8e8e8" stroke-width="1"/><path d="M65 162.5H70" stroke="#e8e8e8" stroke-width="1"/><path d="M53 168.5H70" stroke="#e8e8e8" stroke-width="1"/><path d="M65 174.5H70" stroke="#e8e8e8" stroke-width="1"/><path d="M65 181.5H70" stroke="#e8e8e8" stroke-width="1"/><path d="M65 187.5H70" stroke="#e8e8e8" stroke-width="1"/><path d="M65 193.5H70" stroke="#e8e8e8" stroke-width="1"/><path d="M61 199.5H70" stroke="#e8e8e8" stroke-width="1"/><path d="M65 206.5H70" stroke="#e8e8e8" stroke-width="1"/><path d="M65 212.5H70" stroke="#e8e8e8" stroke-width="1"/><path d="M65 218.5H70" stroke="#e8e8e8" stroke-width="1"/><path d="M65 224.5H70" stroke="#e8e8e8" stroke-width="1"/><path d="M53 231.5H70" stroke="#e8e8e8" stroke-width="1"/><path d="M65 237.5H70" stroke="#e8e8e8" stroke-width="1"/><path d="M65 243.5H70" stroke="#e8e8e8" stroke-width="1"/><path d="M65 249.5H70" stroke="#e8e8e8" stroke-width="1"/><path d="M65 256.5H70" stroke="#e8e8e8" stroke-width="1"/><path d="M61 262.5H70" stroke="#e8e8e8" stroke-width="1"/><path d="M65 268.5H70" stroke="#e8e8e8" stroke-width="1"/><path d="M65 274.5H70" stroke="#e8e8e8" stroke-width="1"/><path d="M65 281.5H70" stroke="#e8e8e8" stroke-width="1"/><path d="M65 287.5H70" stroke="#e8e8e8" stroke-width="1"/><path d="M53 293.5H70" stroke="#e8e8e8" stroke-width="1"/><path d="M65 299.5H70" stroke="#e8e8e8" stroke-width="1"/><path d="M65 306.5H70" stroke="#e8e8e8" stroke-width="1"/><path d="M65 312.5H70" stroke="#e8e8e8" stroke-width="1"/><path d="M65 318.5H70" stroke="#e8e8e8" stroke-width="1"/><path d="M61 324.5H70" stroke="#e8e8e8" stroke-width="1"/><path d="M65 331.5H70" stroke="#e8e8e8" stroke-width="1"/><path d="M65 337.5H70" stroke="#e8e8e8" stroke-width="1"/><path d="M65 343.5H70" stroke="#e8e8e8" stroke-width="1"/><path d="M65 349.5H70" stroke="#e8e8e8" stroke-width="1"/><path d="M53 356.5H70" stroke="#e8e8e8" stroke-width="1"/><path d="M65 362.5H70" stroke="#e8e8e8" stroke-width="1"/><path d="M65 368.5H70" stroke="#e8e8e8" stroke-width="1"/><path d="M65 374.5H70" stroke="#e8e8e8" stroke-width="1"/><path d="M65 381.5H70" stroke="#e8e8e8" stroke-width="1"/><path d="M61 387.5H70" stroke="#e8e8e8" stroke-width="1"/><path d="M65 393.5H70" stroke="#e8e8e8" stroke-width="1"/><path d="M65 399.5H70" stroke="#e8e8e8" stroke-width="1"/><path d="M65 406.5H70" stroke="#e8e8e8" stroke-width="1"/><path d="M65 412.5H70" stroke="#e8e8e8" stroke-width="1"/><path d="M53 418.5H70" stroke="#e8e8e8" stroke-width="1"/><path d="M65 424.5H70" stroke="#e8e8e8" stroke-width="1"/><path d="M65 431.5H70" stroke="#e8e8e8" stroke-width="1"/><path d="M65 437.5H70" stroke="#e8e8e8" stroke-width="1"/><path d="M65 443.5H70" stroke="#e8e8e8" stroke-width="1"/><path d="M61 449.5H70" stroke="#e8e8e8" stroke-width="1"/><path d="M65 456.5H70" stroke="#e8e8e8" stroke-width="1"/><path d="M65 462.5H70" stroke="#e8e8e8" stroke-width="1"/><path d="M65 468.5H70" stroke="#e8e8e8" stroke-width="1"/><path d="M65 474.5H70" stroke="#e8e8e8" stroke-width="1"/><path d="M53 481.5H70" stroke="#e8e8e8" stroke-width="1"/><path d="M65 487.5H70" stroke="#e8e8e8" stroke-width="1"/><path d="M65 493.5H70" stroke="#e8e8e8" stroke-width="1"/><path d="M65 499.5H70" stroke="#e8e8e8" stroke-width="1"/><path d="M65 506.5H70" stroke="#e8e8e8" stroke-width="1"/><path d="M61 512.5H70" stroke="#e8e8e8" stroke-width="1"/><path d="M65 518.5H70" stroke="#e8e8e8" stroke-width="1"/><path d="M65 524.5H70" stroke="#e8e8e8" stroke-width="1"/><path d="M65 531.5H70" stroke="#e8e8e8" stroke-width="1"/><path d="M65 537.5H70" stroke="#e8e8e8" stroke-width="1"/><path d="M53 543.5H70" stroke="#e8e8e8" stroke-width="1"/><path d="M65 549.5H70" stroke="#e8e8e8" stroke-width="1"/><path d="M65 556.5H70" stroke="#e8e8e8" stroke-width="1"/><path d="M65 562.5H70" stroke="#e8e8e8" stroke-width="1"/><path d="M65 568.5H70" stroke="#e8e8e8" stroke-width="1"/><path d="M61 574.5H70" stroke="#e8e8e8" stroke-width="1"/><path d="M65 581.5H70" stroke="#e8e8e8" stroke-width="1"/><path d="M65 587.5H70" stroke="#e8e8e8" stroke-width="1"/><path d="M65 593.5H70" stroke="#e8e8e8" stroke-width="1"/><path d="M65 599.5H70" stroke="#e8e8e8" stroke-width="1"/><path d="M53 606.5H70" stroke="#e8e8e8" stroke-width="1"/><path d="M65 612.5H70" stroke="#e8e8e8" stroke-width="1"/><path d="M65 618.5H70" stroke="#e8e8e8" stroke-width="1"/><path d="M65 624.5H70" stroke="#e8e8e8" stroke-width="1"/><path d="M65 631.5H70" stroke="#e8e8e8" stroke-width="1"/></svg><span class="t" style="left:81.0px;top:91.0px;font:400 9.5px/9.5px 'Liberation Sans';color:#dcdcdc;letter-spacing:0.000px;">-100</span><span class="t" style="left:144.0px;top:91.0px;font:400 9.5px/9.5px 'Liberation Sans';color:#dcdcdc;letter-spacing:0.000px;">-50</span><span class="t" style="left:208.0px;top:91.0px;font:400 9.5px/9.5px 'Liberation Sans';color:#dcdcdc;letter-spacing:0.000px;">0</span><span class="t" style="left:272.0px;top:91.0px;font:400 9.5px/9.5px 'Liberation Sans';color:#dcdcdc;letter-spacing:0.000px;">50</span><span class="t" style="left:335.0px;top:91.0px;font:400 9.5px/9.5px 'Liberation Sans';color:#dcdcdc;letter-spacing:0.000px;">100</span><span class="t" style="left:399.0px;top:91.0px;font:400 9.5px/9.5px 'Liberation Sans';color:#dcdcdc;letter-spacing:0.000px;">150</span><span class="t" style="left:463.0px;top:91.0px;font:400 9.5px/9.5px 'Liberation Sans';color:#dcdcdc;letter-spacing:0.000px;">200</span><span class="t" style="left:527.0px;top:91.0px;font:400 9.5px/9.5px 'Liberation Sans';color:#dcdcdc;letter-spacing:0.000px;">250</span><span class="t" style="left:590.0px;top:91.0px;font:400 9.5px/9.5px 'Liberation Sans';color:#dcdcdc;letter-spacing:0.000px;">300</span><span class="t" style="left:654.0px;top:91.0px;font:400 9.5px/9.5px 'Liberation Sans';color:#dcdcdc;letter-spacing:0.000px;">350</span><span class="t" style="left:718.0px;top:91.0px;font:400 9.5px/9.5px 'Liberation Sans';color:#dcdcdc;letter-spacing:0.000px;">400</span><span class="t" style="left:781.0px;top:91.0px;font:400 9.5px/9.5px 'Liberation Sans';color:#dcdcdc;letter-spacing:0.000px;">450</span><span class="t" style="left:845.0px;top:91.0px;font:400 9.5px/9.5px 'Liberation Sans';color:#dcdcdc;letter-spacing:0.000px;">500</span><span class="t" style="left:909.0px;top:91.0px;font:400 9.5px/9.5px 'Liberation Sans';color:#dcdcdc;letter-spacing:0.000px;">550</span><div style="position:absolute;left:58px;top:174px;width:4px;height:1px;background:#dcdcdc"></div><span class="t" style="left:57.9px;top:177.0px;font:400 9.5px/9.5px 'Liberation Sans';color:#dcdcdc;letter-spacing:0.000px;">5</span><span class="t" style="left:57.9px;top:185.6px;font:400 9.5px/9.5px 'Liberation Sans';color:#dcdcdc;letter-spacing:0.000px;">0</span><span class="t" style="left:57.9px;top:232.0px;font:400 9.5px/9.5px 'Liberation Sans';color:#dcdcdc;letter-spacing:0.000px;">0</span><span class="t" style="left:57.9px;top:294.0px;font:400 9.5px/9.5px 'Liberation Sans';color:#dcdcdc;letter-spacing:0.000px;">5</span><span class="t" style="left:57.9px;top:302.6px;font:400 9.5px/9.5px 'Liberation Sans';color:#dcdcdc;letter-spacing:0.000px;">0</span><span class="t" style="left:57.9px;top:357.0px;font:400 9.5px/9.5px 'Liberation Sans';color:#dcdcdc;letter-spacing:0.000px;">1</span><span class="t" style="left:57.9px;top:365.6px;font:400 9.5px/9.5px 'Liberation Sans';color:#dcdcdc;letter-spacing:0.000px;">0</span><span class="t" style="left:57.9px;top:374.2px;font:400 9.5px/9.5px 'Liberation Sans';color:#dcdcdc;letter-spacing:0.000px;">0</span><span class="t" style="left:57.9px;top:419.0px;font:400 9.5px/9.5px 'Liberation Sans';color:#dcdcdc;letter-spacing:0.000px;">1</span><span class="t" style="left:57.9px;top:427.6px;font:400 9.5px/9.5px 'Liberation Sans';color:#dcdcdc;letter-spacing:0.000px;">5</span><span class="t" style="left:57.9px;top:436.2px;font:400 9.5px/9.5px 'Liberation Sans';color:#dcdcdc;letter-spacing:0.000px;">0</span><span class="t" style="left:57.9px;top:482.0px;font:400 9.5px/9.5px 'Liberation Sans';color:#dcdcdc;letter-spacing:0.000px;">2</span><span class="t" style="left:57.9px;top:490.6px;font:400 9.5px/9.5px 'Liberation Sans';color:#dcdcdc;letter-spacing:0.000px;">0</span><span class="t" style="left:57.9px;top:499.2px;font:400 9.5px/9.5px 'Liberation Sans';color:#dcdcdc;letter-spacing:0.000px;">0</span><span class="t" style="left:57.9px;top:544.0px;font:400 9.5px/9.5px 'Liberation Sans';color:#dcdcdc;letter-spacing:0.000px;">2</span><span class="t" style="left:57.9px;top:552.6px;font:400 9.5px/9.5px 'Liberation Sans';color:#dcdcdc;letter-spacing:0.000px;">5</span><span class="t" style="left:57.9px;top:561.2px;font:400 9.5px/9.5px 'Liberation Sans';color:#dcdcdc;letter-spacing:0.000px;">0</span><span class="t" style="left:57.9px;top:607.0px;font:400 9.5px/9.5px 'Liberation Sans';color:#dcdcdc;letter-spacing:0.000px;">3</span><span class="t" style="left:57.9px;top:615.6px;font:400 9.5px/9.5px 'Liberation Sans';color:#dcdcdc;letter-spacing:0.000px;">0</span><span class="t" style="left:57.9px;top:624.2px;font:400 9.5px/9.5px 'Liberation Sans';color:#dcdcdc;letter-spacing:0.000px;">0</span><div style="position:absolute;left:53px;top:89px;width:18px;height:25px;box-sizing:border-box;border:1px solid #1e1e1e;border-radius:6px;background:#2a2a2a"></div><svg style="left:54px;top:93px" width="16" height="18" viewBox="0 0 16 18"><path d="M4 8V5.5a4 4 0 0 1 8 0V8" stroke="#111" stroke-width="1.8" fill="none"/><defs><linearGradient id="glk" x1="0" y1="0" x2="0" y2="1"><stop offset="0" stop-color="#f8d060"/><stop offset="1" stop-color="#d88a10"/></linearGradient></defs><rect x="2" y="8" width="12" height="8" rx="1" fill="url(#glk)" stroke="#222" stroke-width="0.6"/><path d="M8 10.5v3" stroke="#111" stroke-width="1.6"/></svg><svg style="left:60px;top:105px" width="20" height="20" viewBox="60 105 20 20"><path d="M71 110L76 110.5L71.5 114Z" fill="#f0f0f0"/><path d="M65 118.5L70 115.5L70 120Z" fill="#f0f0f0"/></svg><svg style="left:60px;top:460px" width="14" height="20" viewBox="60 460 14 20"><path d="M65.2 468.5L70 472.3L65.2 476.1Z" fill="#f0f0f0"/></svg><svg style="left:655px;top:106px" width="16" height="8" viewBox="0 0 16 8"><path d="M3 1h10L8 7z" fill="#f0f0f0"/></svg><svg style="left:0;top:0" width="923" height="632" viewBox="0 0 923 632"><defs><clipPath id="cv"><rect x="70" y="114" width="853" height="518"/></clipPath></defs><g clip-path="url(#cv)"><path d="M207 223.8L478 228.4L471.9 611.3L200.6 605.8Z" fill="#5e5e5e"/><path d="M205.7 221.8L476.7 226.4L470.7 609.7L199.4 604.2Z" fill="#ffffff" stroke="#6a6b90" stroke-width="1.2"/><path d="M217.2 311.9C226 313 247 323 258 336C264 343 267 350 267.3 356.6C271 348 279 333 285.2 322.2Q290 314 298.1 306.5C301.5 316 302 332 300.3 342.3C299.5 352 296 362 291 372.4C286 381 276 392 270.9 396.7Q268 398.5 265.2 398.9V391.3H256.6V398.2C252 396 247.5 390 246 383C244.5 375 244.4 368 244.2 362Q244 352 236.5 343.7L215.5 314.5Q214 311.5 217.2 311.9Z" fill="#fff" stroke="#000" stroke-width="1.7" stroke-linejoin="round"/><path d="M467.3 320A71.6 68.4 0 1 0 468.7 331.6H447.7V320Z" fill="#fff" stroke="#000" stroke-width="2.2"/><path d="M292.9 420.1Q298 416.5 303 418Q308 414 315.5 414.4L340.8 424.3L336.9 436.8L346 440.2L349.9 428.2L388.6 444.5A37.5 34.7 0 0 1 422.4 415.6L417.6 426.7L426.1 429.9L430 415.9A37.5 34.7 0 1 1 413.8 481.7L422.3 524A17 17 0 0 1 388.5 528L379.7 481.5Q372 483 362.7 482.4Q345 480 330 470Q318 461 312.7 454.1L307.4 451.9L275.1 482.3A18 18 0 0 1 250.9 455.7Z" fill="#808080" stroke="#000" stroke-width="2.6" stroke-linejoin="round"/><ellipse cx="444.9" cy="454.5" rx="4.3" ry="5.8" transform="rotate(20 444.9 454.5)" fill="#fff" stroke="#000" stroke-width="2"/><path d="M260 510.8L356.8 512.3Q368 514 372 523Q374.5 530 373.7 537.5L372.2 538L396 573Q402 585 396 595Q388 603 377 600.5Q370 598 366.5 592L339.1 550Q325 559.5 308.5 560V545.3H298V560.7Q280 560 268.4 549.2H262.3L243 589.5Q238 598 227.7 599.2Q216 598 211 588Q208 580 212.5 570.5L233 529.2Q238 521 246.9 518.4Q250 513 260 510.8Z" fill="#808080" stroke="#000" stroke-width="2.6" stroke-linejoin="round"/></g></svg><div style="position:absolute;left:923px;top:89px;width:17px;height:568px;background:#2e2e2e"></div><div style="position:absolute;left:928px;top:225px;width:8px;height:256px;background:#a3a3a3;border-radius:4px"></div><div style="position:absolute;left:940px;top:89px;width:13px;height:568px;background:#353535"></div><svg style="left:944px;top:364px" width="6" height="18" viewBox="0 0 6 18"><circle cx="3" cy="3" r="1.4" fill="#e8e8e8"/><circle cx="3" cy="9" r="1.4" fill="#e8e8e8"/><circle cx="3" cy="15" r="1.4" fill="#e8e8e8"/></svg><div style="position:absolute;left:953px;top:89px;width:413px;height:568px;background:#353535"></div><div style="position:absolute;left:70px;top:632px;width:853px;height:25px;background:#2f2f2f"></div><div style="position:absolute;left:236px;top:641px;width:683px;height:8px;background:#a3a3a3;border-radius:4px"></div><div style="position:absolute;left:923px;top:89px;width:18px;height:25px;box-sizing:border-box;border:1px solid #1c1c1c;border-radius:7px;background:#2e2e2e"></div><div style="position:absolute;left:924px;top:93px;width:16px;height:1px;background:#111"></div><div style="position:absolute;left:924px;top:94px;width:16px;height:15px;background:linear-gradient(#ffffff,#e2e2e2 70%,#f4f4f4);border-radius:4px"></div><svg style="left:927px;top:96px" width="10" height="12" viewBox="0 0 10 12"><path d="M3 2.5L5.5 1H7V10H4.5V4.2L3 4.8Z" fill="#fff" stroke="#8a8a8a" stroke-width="0.9" stroke-linejoin="round"/></svg><div style="position:absolute;left:923px;top:632px;width:17px;height:26px;box-sizing:border-box;border:1px solid #1a1a1a;border-radius:6px;background:#303030"></div><svg style="left:920px;top:630px" width="24" height="30" viewBox="920 630 24 30"><path d="M927.1 637.3L938.2 647.3L928.2 652.1Z" fill="none" stroke="#000" stroke-width="1.6" stroke-linejoin="round"/><path d="M927.10 637.30L932.65 642.30L931.17 645.57Z" fill="#60f020" stroke="#60f020" stroke-width="0.3"/><path d="M932.65 642.30L938.20 647.30L931.17 645.57Z" fill="#ff9010" stroke="#ff9010" stroke-width="0.3"/><path d="M938.20 647.30L933.20 649.70L931.17 645.57Z" fill="#ff2060" stroke="#ff2060" stroke-width="0.3"/><path d="M933.20 649.70L928.20 652.10L931.17 645.57Z" fill="#9020ff" stroke="#9020ff" stroke-width="0.3"/><path d="M928.20 652.10L927.65 644.70L931.17 645.57Z" fill="#2060ff" stroke="#2060ff" stroke-width="0.3"/><path d="M927.65 644.70L927.10 637.30L931.17 645.57Z" fill="#20f0a0" stroke="#20f0a0" stroke-width="0.3"/><circle cx="931.17" cy="645.57" r="1.6" fill="#e0f0ff" opacity="0.6"/></svg><div style="position:absolute;left:953px;top:105px;width:309px;height:537px;box-sizing:border-box;border:1px solid #1e1e1e;background:#2d2d2d"></div><div style="position:absolute;left:954px;top:106px;width:307px;height:37px;background:#272727"></div><div style="position:absolute;left:954px;top:143px;width:307px;height:1px;background:#1e1e1e"></div><div style="position:absolute;left:963px;top:106px;width:181px;height:37px;background:#2e2e2e"></div><div style="position:absolute;left:962px;top:106px;width:1px;height:37px;background:#222"></div><div style="position:absolute;left:1144px;top:106px;width:1px;height:37px;background:#222"></div><div style="position:absolute;left:963px;top:139px;width:181px;height:4px;background:#1c56a8"></div><svg style="left:970px;top:110px" width="24" height="24" viewBox="970 110 24 24"><defs><linearGradient id="gyl" x1="0" y1="0" x2="1" y2="1"><stop offset="0" stop-color="#ffc400"/><stop offset="1" stop-color="#ffe890"/></linearGradient></defs><rect x="976" y="121.8" width="8" height="8.4" fill="url(#gyl)" stroke="#fff" stroke-width="0.6"/><path d="M983.2 116.8V119Q983.2 120.5 985.3 120.8V127.5Q983.2 127.8 983.2 129.5V131.2H984.6V129.8H988.6V131.2H990V129.5Q990 127.8 987.9 127.5V120.8Q990 120.5 990 119V116.8H988.6V118.3H984.6V116.8Z" fill="#f4f4f4" stroke="#000" stroke-width="0.8" stroke-linejoin="round"/></svg><span class="t" style="left:993.0px;top:117.8px;font:400 12px/12px 'Liberation Sans';color:#f0f0f0;letter-spacing:-0.112px;">Propiedades del objeto</span><svg style="left:1118px;top:118px" width="12" height="12" viewBox="0 0 12 12"><path d="M1.5 1.5l9 9M10.5 1.5l-9 9" stroke="#9a9a9a" stroke-width="1.3"/></svg><div style="position:absolute;left:1088px;top:148px;width:168px;height:34px;box-sizing:border-box;border:1px solid #1e1e1e;border-radius:5px;background:#313131"></div><span class="t" style="left:959.5px;top:158.8px;font:400 12px/12px 'Liberation Sans';color:#a9a9a9;letter-spacing:0.000px;">ID:</span><div style="position:absolute;left:1088px;top:186px;width:168px;height:34px;box-sizing:border-box;border:1px solid #1e1e1e;border-radius:5px;background:#313131"></div><span class="t" style="left:959.5px;top:196.8px;font:400 12px/12px 'Liberation Sans';color:#a9a9a9;letter-spacing:0.000px;">Etiqueta:</span><div style="position:absolute;left:1088px;top:224px;width:168px;height:34px;box-sizing:border-box;border:1px solid #1e1e1e;border-radius:5px;background:#313131"></div><span class="t" style="left:959.5px;top:234.8px;font:400 12px/12px 'Liberation Sans';color:#a9a9a9;letter-spacing:0.000px;">Título:</span><div style="position:absolute;left:1088px;top:262px;width:168px;height:34px;box-sizing:border-box;border:1px solid #1e1e1e;border-radius:5px;background:#313131"></div><span class="t" style="left:959.5px;top:272.8px;font:400 12px/12px 'Liberation Sans';color:#a9a9a9;letter-spacing:0.000px;">PPP SVG:</span><div style="position:absolute;left:1088px;top:300px;width:168px;height:34px;box-sizing:border-box;border:1px solid #1e1e1e;border-radius:5px;background:#313131"></div><span class="t" style="left:959.5px;top:310.8px;font:400 12px/12px 'Liberation Sans';color:#a9a9a9;letter-spacing:-0.262px;">Renderizado de imagen:</span><div style="position:absolute;left:1222px;top:264px;width:1px;height:30px;background:#292929"></div><div style="position:absolute;left:1238px;top:264px;width:2px;height:30px;background:#292929"></div><svg style="left:1224px;top:273px" width="30" height="12" viewBox="0 0 30 12"><path d="M1 6h10" stroke="#5a5a5a" stroke-width="1.4"/><path d="M18 6h10M23 1v10" stroke="#5a5a5a" stroke-width="1.4"/></svg><span class="t" style="left:1091.0px;top:272.8px;font:400 12px/12px 'Liberation Sans';color:#9a9a9a;letter-spacing:0.000px;">1.00</span><svg style="left:1231px;top:313px" width="14" height="8" viewBox="0 0 14 8"><path d="M1 0.5h12L7 7z" fill="#bdbdbd"/></svg><span class="t" style="left:955.0px;top:339.4px;font:400 12px/12px 'Liberation Sans';color:#a9a9a9;letter-spacing:0.000px;">Descripción:</span><div style="position:absolute;left:968px;top:362px;width:288px;height:182px;box-sizing:border-box;border:1px solid #1e1e1e;background:#2f2f2f"></div><div style="position:absolute;left:963px;top:562px;width:15px;height:14px;box-sizing:border-box;border:1px solid #1e1e1e;border-radius:4px;background:#3a3a3a"></div><span class="t" style="left:983.3px;top:562.8px;font:400 12px/12px 'Liberation Sans';color:#a9a9a9;letter-spacing:0.000px;">Ocultar</span><div style="position:absolute;left:1112px;top:562px;width:16px;height:14px;box-sizing:border-box;border:1px solid #1e1e1e;border-radius:4px;background:#3a3a3a"></div><span class="t" style="left:1132.0px;top:562.8px;font:400 12px/12px 'Liberation Sans';color:#a9a9a9;letter-spacing:0.000px;">Bloquear</span><div style="position:absolute;left:963px;top:596px;width:15px;height:14px;box-sizing:border-box;border:1px solid #1e1e1e;border-radius:4px;background:#3a3a3a"></div><span class="t" style="left:983.3px;top:596.8px;font:400 12px/12px 'Liberation Sans';color:#a9a9a9;letter-spacing:-0.090px;">Conservar proporción</span><div style="position:absolute;left:1108px;top:587px;width:147px;height:32px;box-sizing:border-box;border:1px solid #1e1e1e;border-radius:5px;background:#303030"></div><span class="t" style="left:1163.5px;top:596.8px;font:400 12px/12px 'Liberation Sans';color:#a9a9a9;letter-spacing:0.000px;">Aplicar</span><svg style="left:958px;top:626px" width="10" height="12" viewBox="0 0 10 12"><path d="M1.5 1L7.5 6L1.5 11Z" fill="#9a9a9a"/></svg><span class="t" style="left:971.7px;top:625.8px;font:400 12px/12px 'Liberation Sans';color:#a9a9a9;letter-spacing:0.000px;">Interactividad</span><svg style="left:1280px;top:90px" width="40" height="560" viewBox="1280 90 40 560"><path d="M1293 101.8h8.5l3.7 3.7v12.5h-12.2z" fill="#f6f6f6" stroke="#d8d8d8" stroke-width="0.6"/><circle cx="1304.7" cy="110.5" r="3.9" fill="#2a62b8" stroke="#e8eef8" stroke-width="0.7"/><path d="M1302.3 110.5h4.8M1304.7 108.1v4.8" stroke="#fff" stroke-width="1.4"/><path d="M1292 140h6l1.5 2h9v11h-16.5z" fill="#c8ad86"/><path d="M1292 145h16.5v8h-16.5z" fill="#dcc6a0"/><rect x="1296.5" y="142.5" width="8" height="4.5" fill="#fff" stroke="#8a7a60" stroke-width="0.5"/><path d="M1292.5 172h15.5v7.5h-15.5z" fill="#3a78c8"/><path d="M1294 172h12.5v3h-12.5z" fill="#9ac0ea"/><path d="M1300.2 163v9M1296.7 168.5l3.5 3.5l3.5-3.5" stroke="#fff" stroke-width="1.8" fill="none"/><g transform="translate(0 2)"><rect x="1292.5" y="205" width="15.5" height="9" rx="1" fill="#d0d0d0" stroke="#333" stroke-width="0.6"/><rect x="1295" y="200" width="10.5" height="5" fill="#fff" stroke="#444" stroke-width="0.5"/><rect x="1295" y="211" width="10.5" height="9" fill="#e6f4e0" stroke="#444" stroke-width="0.5"/><path d="M1294 207.5h3" stroke="#333" stroke-width="1"/></g><path d="M1282 238.5h36M1282 406.5h36M1282 526.5h36" stroke="#2c2c2c" stroke-width="1"/><path d="M1297 256.5h6l4 4v10.5h-10z" fill="#f4f4f4" stroke="#333" stroke-width="0.6"/><path d="M1291 264h10M1298.5 261.5l2.5 2.5l-2.5 2.5" stroke="#000" stroke-width="1.2" fill="none"/><path d="M1293 291h6l4 4v10.5h-10z" fill="#f4f4f4" stroke="#333" stroke-width="0.6"/><path d="M1298 299h9M1304.5 296.5l2.5 2.5l-2.5 2.5" stroke="#000" stroke-width="1.2" fill="none"/><path d="M1293.5 345.5h8a4 4 0 0 1 0 8h-6" stroke="#6a5a3a" stroke-width="1.6" fill="none"/><path d="M1296.5 342l-3.5 3.5l3.5 3.5" stroke="#6a5a3a" stroke-width="1.6" fill="none"/><path d="M1306.5 380.5h-8a4 4 0 0 0 0 8h6" stroke="#3e5a32" stroke-width="1.6" fill="none"/><path d="M1303.5 377l3.5 3.5l-3.5 3.5" stroke="#3e5a32" stroke-width="1.6" fill="none"/><rect x="1292.5" y="424.5" width="9" height="10" fill="#f4f4f4" stroke="#333" stroke-width="0.6"/><rect x="1298" y="429" width="9" height="10" fill="#f4f4f4" stroke="#333" stroke-width="0.6"/><path d="M1300 432h5M1300 434.5h5M1300 437h4" stroke="#777" stroke-width="0.6"/><path d="M1294 458l8 9M1306 458l-8 9" stroke="#e8e8e8" stroke-width="1.6"/><circle cx="1296" cy="469.5" r="2.6" fill="none" stroke="#e02020" stroke-width="1.6"/><circle cx="1304" cy="469.5" r="2.6" fill="none" stroke="#e02020" stroke-width="1.6"/><rect x="1292.5" y="495" width="13" height="15" rx="1" fill="#c8963c" stroke="#6a4a1a" stroke-width="0.6"/><rect x="1297" y="498" width="10" height="12.5" fill="#fafafa" stroke="#555" stroke-width="0.5"/><rect x="1296" y="493.5" width="6" height="3" fill="#e0e0e0" stroke="#333" stroke-width="0.5"/><path d="M1299 502h6M1299 504.5h6M1299 507h5" stroke="#777" stroke-width="0.6"/><rect x="1292.5" y="544.5" width="10" height="10" fill="#e8eef6" stroke="#111" stroke-width="0.9"/><rect x="1296.5" y="548.5" width="10.5" height="10.5" fill="#c6d8ec" stroke="#111" stroke-width="0.9"/><rect x="1292.5" y="578.5" width="10" height="10" fill="#e8eef6" stroke="#111" stroke-width="0.9"/><rect x="1296.5" y="582.5" width="10.5" height="10.5" fill="#f4f4f4" stroke="#111" stroke-width="0.9"/><path d="M1299.5 587v-1.5a2.2 2.2 0 0 1 4.4 0v1.5" stroke="#111" stroke-width="0.9" fill="none"/><rect x="1298.5" y="587" width="6.5" height="4.5" fill="#f0c030" stroke="#111" stroke-width="0.5"/><path d="M1297 631.5L1303 637.5L1297 643.5Z" fill="#f0f0f0"/></svg><div style="position:absolute;left:1326px;top:93px;width:36px;height:34px;background:#212121;border-radius:7px"></div><div style="position:absolute;left:1326px;top:331px;width:36px;height:33px;background:#212121;border-radius:7px"></div><div style="position:absolute;left:1326px;top:436px;width:36px;height:34px;background:#212121;border-radius:7px"></div><div style="position:absolute;left:1326px;top:555px;width:36px;height:33px;background:#212121;border-radius:7px"></div><svg style="left:1320px;top:90px" width="46" height="560" viewBox="1320 90 46 560"><g opacity="1.0"><path d="M1340.4 106.7L1347.15 113.2" stroke="#000" stroke-width="1.1"/><path d="M1344.55 113.5L1347.55 113.6L1347.45 110.6" stroke="#000" stroke-width="1.1" fill="none"/><path d="M1338.9 102.2L1341.9 105.2L1338.9 108.2L1335.9 105.2Z" fill="#3a3a9a" stroke="#1818e8" stroke-width="1.1"/><path d="M1348.75 111.8L1351.75 114.8L1348.75 117.8L1345.75 114.8Z" fill="#4a6a5a" stroke="#1a7a2a" stroke-width="1.1"/></g><g opacity="1.0"><path d="M1340.4 155.2L1347.15 161.70000000000002" stroke="#000" stroke-width="1.1"/><path d="M1344.55 162.0L1347.55 162.10000000000002L1347.45 159.10000000000002" stroke="#000" stroke-width="1.1" fill="none"/><path d="M1338.9 150.7L1341.9 153.7L1338.9 156.7L1335.9 153.7Z" fill="#3a3a9a" stroke="#1818e8" stroke-width="1.1"/><path d="M1348.75 160.3L1351.75 163.3L1348.75 166.3L1345.75 163.3Z" fill="#4a6a5a" stroke="#1a7a2a" stroke-width="1.1"/></g><g opacity="1.0"><path d="M1340.4 344.7L1347.15 351.2" stroke="#000" stroke-width="1.1"/><path d="M1344.55 351.5L1347.55 351.6L1347.45 348.6" stroke="#000" stroke-width="1.1" fill="none"/><path d="M1338.9 340.2L1341.9 343.2L1338.9 346.2L1335.9 343.2Z" fill="#3a3a9a" stroke="#1818e8" stroke-width="1.1"/><path d="M1348.75 349.8L1351.75 352.8L1348.75 355.8L1345.75 352.8Z" fill="#4a6a5a" stroke="#1a7a2a" stroke-width="1.1"/></g><g opacity="1.0"><path d="M1340.4 568.7L1347.15 575.1999999999999" stroke="#000" stroke-width="1.1"/><path d="M1344.55 575.5L1347.55 575.5999999999999L1347.45 572.5999999999999" stroke="#000" stroke-width="1.1" fill="none"/><path d="M1338.9 564.2L1341.9 567.2L1338.9 570.2L1335.9 567.2Z" fill="#3a3a9a" stroke="#1818e8" stroke-width="1.1"/><path d="M1348.75 573.8L1351.75 576.8L1348.75 579.8L1345.75 576.8Z" fill="#4a6a5a" stroke="#1a7a2a" stroke-width="1.1"/></g><path d="M1328 134.5h32M1328 323.5h32M1328 547.5h32" stroke="#2c2c2c" stroke-width="1"/><path d="M1349 186v16h-11" stroke="#2e4a2e" stroke-width="1" stroke-dasharray="1.5,1" fill="none"/><path d="M1349 220v14h-11" stroke="#2e3a2e" stroke-width="1" stroke-dasharray="1.5,1" fill="none"/><circle cx="1349" cy="233" r="2" fill="#2e4a2e"/><path d="M1349 258v15h-11" stroke="#2e3a2e" stroke-width="1" stroke-dasharray="1.5,1" fill="none"/><circle cx="1349" cy="260" r="2" fill="#2e4a2e"/><path d="M1349 292v14h-11" stroke="#2e3a2e" stroke-width="1" stroke-dasharray="1.5,1" fill="none"/><circle cx="1341" cy="296" r="2" fill="#2e4a2e"/><path d="M1337 375Q1347 377 1350 384Q1351 389 1344 390" stroke="#1e8a2a" stroke-width="1.6" fill="none"/><path d="M1335 424L1354 411M1336 422L1353 414" stroke="#8a8a8a" stroke-width="0.9"/><circle cx="1344" cy="418" r="2" fill="#1e8a2a"/><path d="M1336.8 445.8Q1346 447 1346.3 455.5M1346 457.5Q1350.5 456 1351.2 452.5" stroke="#b0b0b0" stroke-width="1.1" fill="none"/><rect x="1341.5" y="455.5" width="5" height="5" fill="#1e8a2a" stroke="#15a02a" stroke-width="0.6" transform="rotate(45 1344 458)"/><circle cx="1344" cy="458" r="1" fill="#6a5ad0"/><path d="M1336 480Q1342 480 1344 484Q1348 488 1350 492Q1351 495 1346 496" stroke="#9a9a9a" stroke-width="1.1" fill="none"/><circle cx="1344" cy="484" r="1.8" fill="#1e8a2a"/><path d="M1335 531L1353 515" stroke="#d02020" stroke-width="1.4"/><path d="M1335 527L1339 533M1349 515L1353 521" stroke="#d02020" stroke-width="1"/><circle cx="1344" cy="523" r="1.8" fill="#1e8a2a"/><path d="M1340 631.5L1346 637.5L1340 643.5Z" fill="#f0f0f0"/></svg><div style="position:absolute;left:0px;top:657px;width:1366px;height:35px;background:#333333"></div><svg style="left:0;top:657px" width="1366" height="24" viewBox="0 657 1366 24" shape-rendering="crispEdges"><rect x="1" y="659" width="19" height="19" fill="#ffffff"/><path d="M2 660L19 677M19 660L2 677" stroke="#8b1a1a" stroke-width="1.6" shape-rendering="geometricPrecision"/><rect x="20" y="659" width="19" height="19" fill="#000000"/><rect x="39" y="659" width="19" height="19" fill="#1a1a1a"/><rect x="58" y="659" width="19" height="19" fill="#333333"/><rect x="77" y="659" width="19" height="19" fill="#4d4d4d"/><rect x="96" y="659" width="19" height="19" fill="#666666"/><rect x="115" y="659" width="19" height="19" fill="#808080"/><rect x="134" y="659" width="19" height="19" fill="#999999"/><rect x="153" y="659" width="19" height="19" fill="#b3b3b3"/><rect x="172" y="659" width="19" height="19" fill="#cccccc"/><rect x="191" y="659" width="19" height="19" fill="#e6e6e6"/><rect x="210" y="659" width="19" height="19" fill="#ececec"/><rect x="229" y="659" width="19" height="19" fill="#f2f2f2"/><rect x="248" y="659" width="19" height="19" fill="#f9f9f9"/><rect x="267" y="659" width="19" height="19" fill="#ffffff"/><rect x="286" y="659" width="19" height="19" fill="#800000"/><rect x="305" y="659" width="19" height="19" fill="#ff0000"/><rect x="324" y="659" width="19" height="19" fill="#808000"/><rect x="343" y="659" width="19" height="19" fill="#ffff00"/><rect x="362" y="659" width="19" height="19" fill="#008000"/><rect x="381" y="659" width="19" height="19" fill="#00ff00"/><rect x="400" y="659" width="19" height="19" fill="#008080"/><rect x="419" y="659" width="19" height="19" fill="#00ffff"/><rect x="438" y="659" width="19" height="19" fill="#000080"/><rect x="457" y="659" width="19" height="19" fill="#0000ff"/><rect x="476" y="659" width="19" height="19" fill="#800080"/><rect x="495" y="659" width="19" height="19" fill="#ff00ff"/><rect x="514" y="659" width="19" height="19" fill="#2b0000"/><rect x="533" y="659" width="19" height="19" fill="#550000"/><rect x="552" y="659" width="19" height="19" fill="#800000"/><rect x="571" y="659" width="19" height="19" fill="#aa0000"/><rect x="590" y="659" width="19" height="19" fill="#d40000"/><rect x="609" y="659" width="19" height="19" fill="#ff0000"/><rect x="628" y="659" width="19" height="19" fill="#ff2a2a"/><rect x="647" y="659" width="19" height="19" fill="#ff5555"/><rect x="666" y="659" width="19" height="19" fill="#ff8080"/><rect x="685" y="659" width="19" height="19" fill="#ffaaaa"/><rect x="704" y="659" width="19" height="19" fill="#ffd5d5"/><rect x="723" y="659" width="19" height="19" fill="#280b0b"/><rect x="742" y="659" width="19" height="19" fill="#501616"/><rect x="761" y="659" width="19" height="19" fill="#782121"/><rect x="780" y="659" width="19" height="19" fill="#a02c2c"/><rect x="799" y="659" width="19" height="19" fill="#c83737"/><rect x="818" y="659" width="19" height="19" fill="#d35f5f"/><rect x="837" y="659" width="19" height="19" fill="#de8787"/><rect x="856" y="659" width="19" height="19" fill="#e9afaf"/><rect x="875" y="659" width="19" height="19" fill="#f4d7d7"/><rect x="894" y="659" width="19" height="19" fill="#241c1c"/><rect x="913" y="659" width="19" height="19" fill="#483737"/><rect x="932" y="659" width="19" height="19" fill="#6c5353"/><rect x="951" y="659" width="19" height="19" fill="#916f6f"/><rect x="970" y="659" width="19" height="19" fill="#ac9393"/><rect x="989" y="659" width="19" height="19" fill="#c8b7b7"/><rect x="1008" y="659" width="19" height="19" fill="#e3dbdb"/><rect x="1027" y="659" width="19" height="19" fill="#2b1100"/><rect x="1046" y="659" width="19" height="19" fill="#552200"/><rect x="1065" y="659" width="19" height="19" fill="#803300"/><rect x="1084" y="659" width="19" height="19" fill="#aa4400"/><rect x="1103" y="659" width="19" height="19" fill="#d45500"/><rect x="1122" y="659" width="19" height="19" fill="#ff6600"/><rect x="1141" y="659" width="19" height="19" fill="#ff7f2a"/><rect x="1160" y="659" width="19" height="19" fill="#ff9955"/><rect x="1179" y="659" width="19" height="19" fill="#ffb380"/><rect x="1198" y="659" width="19" height="19" fill="#ffccaa"/><rect x="1217" y="659" width="19" height="19" fill="#ffe6d5"/><rect x="1236" y="659" width="19" height="19" fill="#281707"/><rect x="1255" y="659" width="19" height="19" fill="#502d16"/><rect x="1274" y="659" width="19" height="19" fill="#784421"/><rect x="1293" y="659" width="19" height="19" fill="#a05a2c"/><rect x="1312" y="659" width="17" height="19" fill="#c87137"/><rect x="1" y="678" width="1328" height="1" fill="#222"/></svg><svg style="left:1340px;top:669px" width="12" height="14" viewBox="0 0 12 14"><path d="M9 1L2 7L9 13Z" fill="#f0f0f0"/></svg><div style="position:absolute;left:4px;top:682px;width:208px;height:8px;background:#a3a3a3;border-radius:4px"></div><span class="t" style="left:1036.5px;top:652.3px;font:400 19.7px/19.7px 'Liberation Sans';color:rgba(175,175,175,0.62);letter-spacing:-0.001px;">Activar Windows</span><span class="t" style="left:1036.5px;top:677.8px;font:400 14.8px/14.8px 'Liberation Sans';color:rgba(175,175,175,0.62);letter-spacing:-0.010px;">Ve a Configuración para activar Windows.</span><div style="position:absolute;left:0px;top:692px;width:1366px;height:36px;background:#333333"></div><span class="t" style="left:2.7px;top:696.8px;font:400 12px/12px 'Liberation Sans';color:#e8e8e8;letter-spacing:-0.429px;">Relleno:</span><span class="t" style="left:14.3px;top:713.6px;font:400 12px/12px 'Liberation Sans';color:#e8e8e8;letter-spacing:-0.760px;">Trazo:</span><span class="t" style="left:74.8px;top:696.8px;font:400 12px/12px 'Liberation Sans';color:#e8e8e8;letter-spacing:0.109px;">N/D</span><span class="t" style="left:74.8px;top:713.6px;font:400 12px/12px 'Liberation Sans';color:#e8e8e8;letter-spacing:0.109px;">N/D</span><span class="t" style="left:154.7px;top:704.8px;font:400 12px/12px 'Liberation Sans';color:#e0e0e0;letter-spacing:0.000px;">O:</span><div style="position:absolute;left:169px;top:695px;width:66px;height:32px;box-sizing:border-box;border:1px solid #1d1d1d;border-radius:6px;background:#2e2e2e"></div><div style="position:absolute;left:202px;top:696px;width:1px;height:30px;background:#292929"></div><div style="position:absolute;left:218px;top:696px;width:2px;height:30px;background:#292929"></div><svg style="left:204.0px;top:705.0px" width="12" height="12" viewBox="0 0 12 12"><path d="M1 6h10" stroke="#555555" stroke-width="1.4"/></svg><svg style="left:220.75px;top:705.0px" width="12" height="12" viewBox="0 0 12 12"><path d="M1 6h10M6 1v10" stroke="#555555" stroke-width="1.4"/></svg><span class="t" style="left:172.0px;top:705.1px;font:400 12px/12px 'Liberation Sans';color:#6e6e6e;letter-spacing:0.000px;">100</span><div style="position:absolute;left:250px;top:695px;width:1px;height:32px;background:#2a2a2a"></div><svg style="left:261px;top:702px" width="18" height="16" viewBox="0 0 18 16"><path d="M1 8Q9 0 17 8Q9 16 1 8Z" fill="#fff" stroke="#111" stroke-width="1.2"/><circle cx="9" cy="8" r="3.3" fill="#111"/><circle cx="8" cy="7" r="0.9" fill="#fff"/><path d="M3 4L2 2M6 2.5L5.5 0.5M9 2V0M12 2.5L12.5 0.5M15 4L16 2" stroke="#111" stroke-width="1"/></svg><svg style="left:298px;top:700px" width="16" height="20" viewBox="0 0 16 20"><path d="M5 9V5.5a3.3 3.3 0 0 1 6.6 0V7" stroke="#111" stroke-width="1.6" fill="none"/><rect x="2.5" y="9" width="9" height="8" rx="1" fill="#e8c447" stroke="#222" stroke-width="0.8" transform="rotate(-12 7 13)"/><circle cx="7" cy="12.5" r="1.2" fill="#222"/></svg><div style="position:absolute;left:324px;top:694px;width:76px;height:33px;box-sizing:border-box;border:1px solid #1d1d1d;border-radius:6px;background:#2e2e2e"></div><div style="position:absolute;left:337px;top:710px;width:2px;height:2px;background:#f0f0f0"></div><span class="t" style="left:342.0px;top:705.6px;font:400 10.5px/10.5px 'Liberation Sans';color:#f0f0f0;letter-spacing:-0.593px;">Capa 1</span><svg style="left:376px;top:707px" width="14" height="8" viewBox="0 0 14 8"><path d="M1 0.5h12L7 7.5z" fill="#f2f2f2"/></svg><span class="t" style="left:402.7px;top:704.8px;font:400 12px/12px 'Liberation Sans';color:#e8e8e8;letter-spacing:-0.091px;">No se han seleccionado objetos. Haga clic, Shift+clic, Alt+rueda encima de objetos o arrastre para seleccionar los objetos.</span><div style="position:absolute;left:1046px;top:695px;width:2px;height:32px;background:#2a2a2a"></div><span class="t" style="left:1057.9px;top:696.9px;font:400 12px/12px 'Liberation Sans';color:#e8e8e8;letter-spacing:0.000px;">X:</span><span class="t" style="left:1057.9px;top:713.1px;font:400 12px/12px 'Liberation Sans';color:#e8e8e8;letter-spacing:0.000px;">Y:</span><span class="t" style="left:1081.8px;top:696.9px;font:400 12px/12px 'Liberation Sans';color:#e8e8e8;letter-spacing:-0.751px;">359.18</span><span class="t" style="left:1081.8px;top:713.1px;font:400 12px/12px 'Liberation Sans';color:#e8e8e8;letter-spacing:-0.751px;">188.77</span><span class="t" style="left:1124.0px;top:704.8px;font:400 12px/12px 'Liberation Sans';color:#e8e8e8;letter-spacing:0.000px;">Z:</span><div style="position:absolute;left:1144px;top:694px;width:88px;height:33px;box-sizing:border-box;border:1px solid #1d1d1d;border-radius:6px;background:#2e2e2e"></div><div style="position:absolute;left:1188px;top:696px;width:1px;height:30px;background:#292929"></div><div style="position:absolute;left:1209px;top:696px;width:1px;height:30px;background:#292929"></div><svg style="left:1192.5px;top:704.75px" width="12" height="12" viewBox="0 0 12 12"><path d="M1 6h10" stroke="#f0f0f0" stroke-width="1.5"/></svg><svg style="left:1214.25px;top:704.75px" width="12" height="12" viewBox="0 0 12 12"><path d="M1 6h10M6 1v10" stroke="#f0f0f0" stroke-width="1.5"/></svg><span class="t" style="left:1155.3px;top:704.5px;font:400 12px/12px 'Liberation Sans';color:#e8e8e8;letter-spacing:-0.677px;">34%</span><span class="t" style="left:1242.4px;top:704.8px;font:400 12px/12px 'Liberation Sans';color:#e8e8e8;letter-spacing:0.000px;">R:</span><div style="position:absolute;left:1262px;top:694px;width:94px;height:33px;box-sizing:border-box;border:1px solid #1d1d1d;border-radius:6px;background:#2e2e2e"></div><div style="position:absolute;left:1312px;top:696px;width:1px;height:30px;background:#292929"></div><div style="position:absolute;left:1332px;top:696px;width:2px;height:30px;background:#292929"></div><svg style="left:1316.0px;top:704.75px" width="12" height="12" viewBox="0 0 12 12"><path d="M1 6h10" stroke="#f0f0f0" stroke-width="1.5"/></svg><svg style="left:1338.0px;top:704.75px" width="12" height="12" viewBox="0 0 12 12"><path d="M1 6h10M6 1v10" stroke="#f0f0f0" stroke-width="1.5"/></svg><span class="t" style="left:1276.3px;top:704.5px;font:400 12px/12px 'Liberation Sans';color:#e8e8e8;letter-spacing:-0.491px;">1.00°</span><div style="position:absolute;left:0px;top:728px;width:1366px;height:40px;background:linear-gradient(90deg,#3a3124 0px,#38301f 48px,#2d2b22 392px,#2e2c24 600px,#352e26 650px,#342d26 700px,#2d2e28 730px,#323228 800px,#3a392c 940px,#3e3b2d 1100px,#433d2e 1366px)"></div><div style="position:absolute;left:48px;top:728px;width:344px;height:40px;background:#f0f0f0"></div><svg style="left:14px;top:738px" width="20" height="20" viewBox="0 0 20 20"><path d="M2 4.2L9 3.2V9.3H2Z M10 3.05L18 1.9V9.3H10Z M2 10.3H9V16.4L2 15.4Z M10 10.3H18V17.7L10 16.55Z" fill="#fff"/></svg><svg style="left:58px;top:738px" width="20" height="20" viewBox="0 0 20 20"><circle cx="12.3" cy="7.3" r="5.2" fill="none" stroke="#1a1a1a" stroke-width="1.3"/><path d="M8.6 11L2.5 17.2" stroke="#1a1a1a" stroke-width="1.4"/></svg><span class="t" style="left:88.5px;top:740.8px;font:400 15px/15px 'Liberation Sans';color:#1b1b1b;letter-spacing:-0.282px;">Escribe aquí para buscar</span><div style="position:absolute;left:591px;top:728px;width:48px;height:40px;background:#5d5850"></div><div style="position:absolute;left:399px;top:766px;width:40px;height:2px;background:#7cb8ea"></div><div style="position:absolute;left:448px;top:766px;width:40px;height:2px;background:#7cb8ea"></div><div style="position:absolute;left:497px;top:766px;width:40px;height:2px;background:#7cb8ea"></div><div style="position:absolute;left:546px;top:766px;width:40px;height:2px;background:#7cb8ea"></div><div style="position:absolute;left:591px;top:766px;width:48px;height:2px;background:#7cb8ea"></div><svg style="left:400px;top:730px" width="240" height="36" viewBox="400 730 240 36"><path d="M408 740h8l2 2h11.5v14.5h-21.5z" fill="#e8b730"/><path d="M408 744h21.5v12.5h-21.5z" fill="#f8d256"/><path d="M414 756.5v-5h9.5v5" stroke="#2a8ae0" stroke-width="3" fill="none"/><circle cx="468.3" cy="747.6" r="10.8" fill="#db4437"/><path d="M468.3 747.6L458.9 742.2A10.8 10.8 0 0 0 463 757L468.3 747.6Z" fill="#0f9d58"/><path d="M468.3 747.6L463 757A10.8 10.8 0 0 0 479.1 747.6Z" fill="#f4b400"/><circle cx="468.3" cy="747.6" r="4.6" fill="#fff"/><circle cx="468.3" cy="747.6" r="3.6" fill="#4285f4"/><circle cx="474" cy="753.5" r="6.6" fill="#222"/><circle cx="474" cy="753.5" r="5.6" fill="#c09050"/><path d="M468.5 754h11v3.5a5.6 5.6 0 0 1 -11 0z" fill="#3a2a1a"/><rect x="504.6" y="735.8" width="24.3" height="24.2" fill="#f8dcc4"/><path d="M511 740h11v4.5h-6.5v3h5.5v4h-5.5v6h-4.5z" fill="#e8832a"/><path d="M515.5 744.5l-4.5 -4.5h11" fill="#f4a050"/><rect x="558" y="737" width="20" height="20.8" rx="1.5" fill="#2b7cd3"/><path d="M558 743.5h20M558 750.5h20" stroke="#41a5ee" stroke-width="0.8"/><rect x="553.9" y="741" width="12.5" height="12.5" rx="1" fill="#185abd"/><path d="M556 744l1.8 6.5l2.2-5l2.2 5l1.8-6.5" stroke="#fff" stroke-width="1.3" fill="none"/><defs><linearGradient id="gtb" x1="0" y1="0" x2="1" y2="0.3"><stop offset="0.25" stop-color="#ffffff"/><stop offset="0.6" stop-color="#9aaac8"/><stop offset="1" stop-color="#3a68b0"/></linearGradient></defs><path d="M614.6 736.3L625.5 747.7L620 751.2L618.3 755.5L614.7 758.6L611.5 755.5L609.5 751.2L604 747.3Z" fill="#050505"/><path d="M614.6 738.3L623.3 747.4Q620.5 746.6 618.6 748.5Q617.5 751 616 750Q614.5 746.5 612.5 747Q610 749.5 608.5 748.8Q607.2 747.6 605.8 747.4Z" fill="url(#gtb)"/><path d="M611 752.5Q615.5 750.8 619.5 752.3" stroke="#7a8aa8" stroke-width="1" fill="none"/><path d="M608.5 755.5h1.5M622 753.5h1.5" stroke="#111" stroke-width="1"/></svg><svg style="left:950px;top:736px" width="30" height="24" viewBox="950 736 30 24"><defs><linearGradient id="gcl" x1="0" y1="0" x2="0" y2="1"><stop offset="0" stop-color="#e6f0fa"/><stop offset="1" stop-color="#9cc4e8"/></linearGradient></defs><path d="M959 755.6Q954 755.6 954 751Q954 747 958.5 746.8Q960 741 966 741Q971.5 741 973 746.5Q976 747.5 976 751Q976 755.6 971 755.6Z" fill="url(#gcl)"/></svg><span class="t" style="left:985.2px;top:741.5px;font:400 14px/14px 'Liberation Sans';color:#f2f2f2;letter-spacing:-0.570px;">22°C</span><span class="t" style="left:1023.6px;top:741.5px;font:400 14px/14px 'Liberation Sans';color:#f2f2f2;letter-spacing:-0.022px;">Nublado</span><svg style="left:1088px;top:738px" width="120" height="22" viewBox="1088 738 120 22"><path d="M1093 751.5l6 -6l6 6" stroke="#f2f2f2" stroke-width="1.3" fill="none"/><rect x="1118.5" y="744.5" width="7.5" height="8" rx="1" fill="none" stroke="#f2f2f2" stroke-width="1.1"/><path d="M1126 747l3 -2v7l-3 -2" stroke="#f2f2f2" stroke-width="1.1" fill="none"/><path d="M1119 742.5q3.5-2 7 0M1119 755q3.5 2 7 0" stroke="#f2f2f2" stroke-width="1" fill="none"/><path d="M1141 741v4M1145 741v4M1139.5 745h7v3a3.5 3.5 0 0 1 -7 0z M1143 751.5v4" stroke="#f2f2f2" stroke-width="1.1" fill="none"/><rect x="1147.5" y="744.5" width="8" height="8" fill="none" stroke="#f2f2f2" stroke-width="1"/><path d="M1149.5 746.5l4 4M1153.5 746.5l-4 4" stroke="#f2f2f2" stroke-width="0.9"/><path d="M1166 755a12 12 0 0 1 12 -12M1168.5 755a9.5 9.5 0 0 1 9.5 -9.5M1171 755a7 7 0 0 1 7 -7M1173.5 755a4.5 4.5 0 0 1 4.5 -4.5" stroke="#f2f2f2" stroke-width="1" fill="none"/><circle cx="1177" cy="754" r="1.3" fill="#f2f2f2"/><path d="M1187 746h3l4 -4v13l-4 -4h-3z" fill="none" stroke="#f2f2f2" stroke-width="1.1"/><path d="M1197 745.5q2 3 0 6M1199.5 743.5q3.5 5 0 10M1202 741.5q5 7 0 14" stroke="#f2f2f2" stroke-width="1" fill="none"/></svg><span class="t" style="left:1215.0px;top:740.8px;font:400 12px/12px 'Liberation Sans';color:#f2f2f2;letter-spacing:-1.972px;">ESP</span><span class="t" style="left:1264.2px;top:732.0px;font:400 12px/12px 'Liberation Sans';color:#f2f2f2;letter-spacing:-0.706px;">19:14</span><span class="t" style="left:1251.8px;top:749.5px;font:400 12px/12px 'Liberation Sans';color:#f2f2f2;letter-spacing:-0.210px;">6/03/2022</span><svg style="left:1320px;top:728px" width="46" height="40" viewBox="1320 728 46 40"><path d="M1325 740H1341V753H1334.5L1332 755.5L1329.5 753H1325Z" fill="#fafafa"/><path d="M1328 743.5h10M1328 746.5h10M1328 749.5h7" stroke="#3a3428" stroke-width="0.9"/><circle cx="1340.6" cy="755.3" r="7.6" fill="#3a3834" stroke="#9a968a" stroke-width="0.9"/><path d="M1337.6 751.3h6l-3.3 8.3" stroke="#f4f4f4" stroke-width="1.6" fill="none" stroke-linejoin="round"/><path d="M1361.5 728V768" stroke="#8a8572" stroke-width="1"/></svg></body></html>
